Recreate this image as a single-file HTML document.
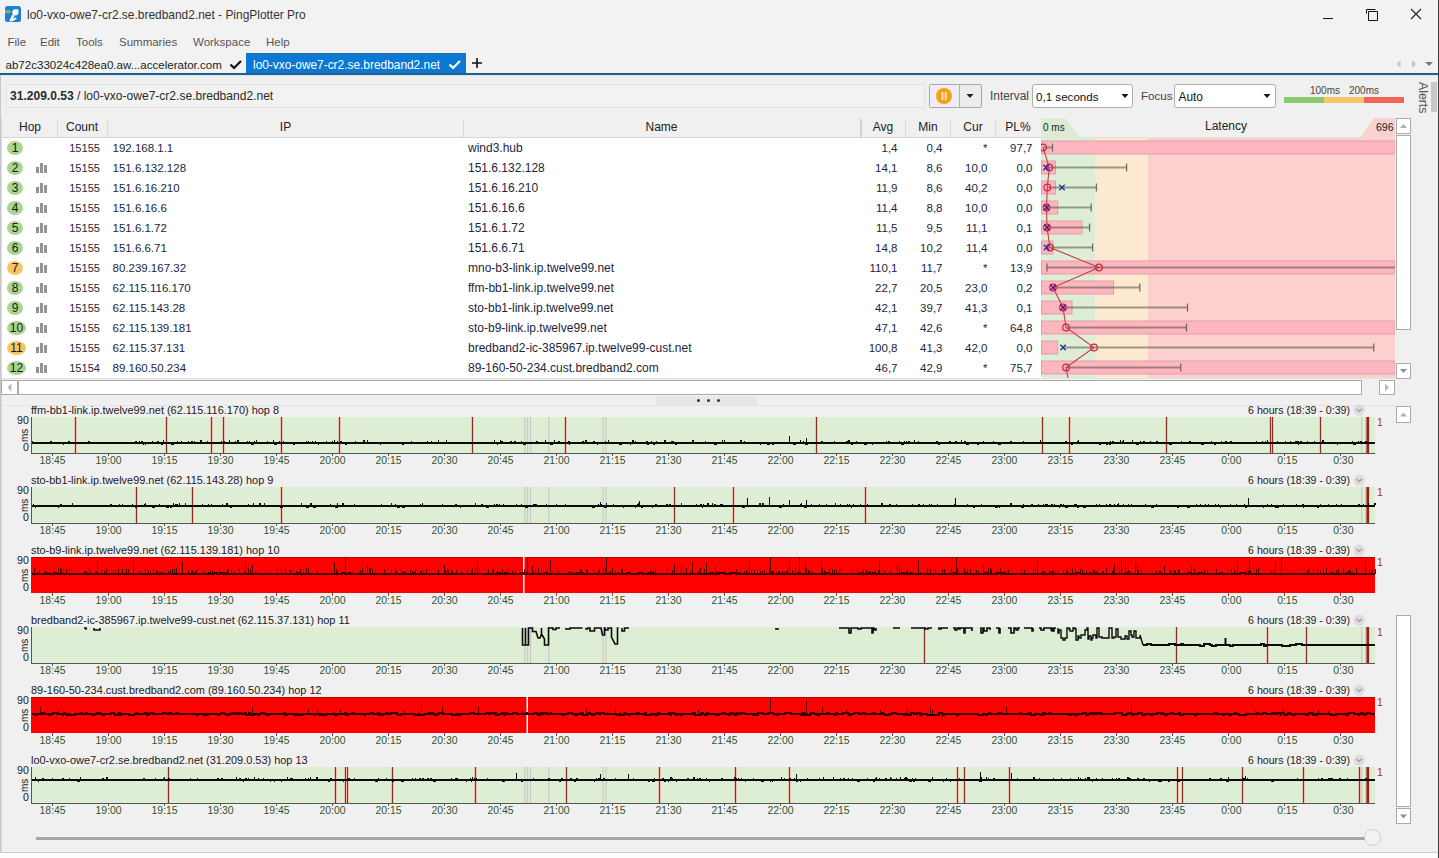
<!DOCTYPE html>
<html><head><meta charset="utf-8"><title>PingPlotter Pro</title>
<style>
html,body{margin:0;padding:0;}
body{width:1439px;height:858px;overflow:hidden;position:relative;background:#f0f0f0;font-family:"Liberation Sans",sans-serif;}
.t{position:absolute;white-space:pre;}
.r{position:absolute;}
svg.r{overflow:visible;}
</style></head><body>
<div class="r" style="left:0px;top:0px;width:1439px;height:73px;background:#f2f2f2;"></div>
<svg class="r" style="left:5px;top:6px" width="16" height="16" viewBox="0 0 16 16">
<rect x="0" y="0" width="16" height="16" rx="2.5" fill="#1f80d2"/>
<rect x="0" y="4.3" width="5.5" height="2.6" fill="#9cc43c" opacity="0.85"/>
<circle cx="10.4" cy="6.3" r="3.1" fill="#fff"/>
<circle cx="12.2" cy="4.4" r="1.2" fill="#fff"/>
<path d="M7.2 8.6 L9.6 9.8 L6.4 15.6 L4.2 15.6 Z" fill="#fff"/>
<path d="M6.5 13.2 L11.2 11.2 L11.4 13 L7.3 15.4 Z" fill="#fff"/>
</svg>
<div class="t" style="top:9px;left:27px;font-size:11.95px;line-height:13.35px;color:#333;">lo0-vxo-owe7-cr2.se.bredband2.net - PingPlotter Pro</div>
<div class="r" style="left:1323px;top:18px;width:10px;height:1px;background:#111;"></div>
<svg class="r" style="left:1360px;top:5px" width="24" height="20"><path d="M8.5 6.5 H17.5 V15.5 H8.5 Z M6.5 8.5 V4.5 H15.5" fill="none" stroke="#111" stroke-width="1"/></svg>
<svg class="r" style="left:1405px;top:3px" width="22" height="22"><path d="M6 6 L16 16 M16 6 L6 16" stroke="#222" stroke-width="1.1"/></svg>
<div class="t" style="top:36px;left:7.5px;font-size:11.5px;line-height:12.85px;color:#555;">File</div>
<div class="t" style="top:36px;left:40px;font-size:11.5px;line-height:12.85px;color:#555;">Edit</div>
<div class="t" style="top:36px;left:76px;font-size:11.5px;line-height:12.85px;color:#555;">Tools</div>
<div class="t" style="top:36px;left:119px;font-size:11.5px;line-height:12.85px;color:#555;">Summaries</div>
<div class="t" style="top:36px;left:193px;font-size:11.5px;line-height:12.85px;color:#555;">Workspace</div>
<div class="t" style="top:36px;left:266px;font-size:11.5px;line-height:12.85px;color:#555;">Help</div>
<div class="t" style="top:59px;left:5.5px;font-size:11.55px;line-height:12.90px;color:#222;">ab72c33024c428ea0.aw...accelerator.com</div>
<svg class="r" style="left:229px;top:59px" width="14" height="12"><path d="M1.5 5.5 L5 9 L12 2" fill="none" stroke="#111" stroke-width="2.2"/></svg>
<div class="r" style="left:246px;top:53px;width:220px;height:20px;background:#0b78d4;"></div>
<div class="r" style="left:246px;top:53px;width:220px;height:1px;background:#2a6ea6;"></div>
<div class="t" style="top:59px;left:253px;font-size:11.9px;line-height:13.29px;color:#fff;">lo0-vxo-owe7-cr2.se.bredband2.net</div>
<svg class="r" style="left:448px;top:59px" width="14" height="12"><path d="M1.5 5.5 L5 9 L12 2" fill="none" stroke="#fff" stroke-width="2.2"/></svg>
<svg class="r" style="left:470px;top:56px" width="14" height="14"><path d="M7 2 V12 M2 7 H12" stroke="#111" stroke-width="1.6"/></svg>
<svg class="r" style="left:1390px;top:56px" width="46" height="16">
<path d="M10.5 4 L6.5 8 L10.5 12 Z" fill="#c8c8c8"/><path d="M22 4 L26 8 L22 12 Z" fill="#c8c8c8"/><path d="M35 6 L43 6 L39 10 Z" fill="#777"/></svg>
<div class="r" style="left:0px;top:72px;width:246px;height:1px;background:#ddf7fb;"></div>
<div class="r" style="left:466px;top:72px;width:973px;height:1px;background:#ddf7fb;"></div>
<div class="r" style="left:0px;top:73px;width:1439px;height:1px;background:#2a5b80;"></div>
<div class="r" style="left:0px;top:74px;width:1439px;height:1px;background:#2f5f8a;"></div>
<div class="r" style="left:0px;top:75px;width:1439px;height:783px;background:#f0f0f0;"></div>
<div class="r" style="left:0px;top:75px;width:1439px;height:1px;background:#d2e8f6;"></div>
<div class="r" style="left:0px;top:76px;width:1439px;height:1px;background:#e8f2f5;"></div>
<div class="r" style="left:0px;top:75px;width:1px;height:777px;background:#c6c6c6;"></div>
<div class="r" style="left:1px;top:118px;width:1px;height:734px;background:#dcdcdc;"></div>
<div class="r" style="left:6px;top:84px;width:919px;height:24px;background:#f2f2f2;border:1px solid #e2e2e2;box-sizing:border-box;"></div>
<div class="t" style="top:90px;left:10px;font-size:12.05px;line-height:13.46px;color:#2a2a2a;"><b>31.209.0.53</b> / lo0-vxo-owe7-cr2.se.bredband2.net</div>
<div class="r" style="left:929px;top:84px;width:53px;height:24px;background:#ececec;border:1px solid #a9a9a9;box-sizing:border-box;border-radius:2px;"></div>
<div class="r" style="left:930px;top:85px;width:29px;height:22px;background:#eeeef2;"></div>
<div class="r" style="left:959px;top:85px;width:1px;height:22px;background:#b4b4b4;"></div>
<svg class="r" style="left:934px;top:86px" width="20" height="20"><circle cx="10" cy="10" r="8" fill="#f4a21c"/><rect x="7.6" y="6" width="1.8" height="8" fill="#fde9b8"/><rect x="10.8" y="6" width="1.8" height="8" fill="#fde9b8"/></svg>
<svg class="r" style="left:965px;top:92px" width="10" height="8"><path d="M1.5 2 L8.5 2 L5 6 Z" fill="#222"/></svg>
<div class="t" style="top:90px;left:990px;font-size:11.9px;line-height:13.29px;color:#444;">Interval</div>
<div class="r" style="left:1032px;top:84px;width:101px;height:24px;background:#fff;border:1px solid #adadad;box-sizing:border-box;border-radius:3px;"></div>
<div class="t" style="top:91px;left:1036px;font-size:11.6px;line-height:12.96px;color:#111;">0,1 seconds</div>
<svg class="r" style="left:1120px;top:92px" width="12" height="8"><path d="M1.5 2 L8.5 2 L5 6 Z" fill="#111"/></svg>
<div class="t" style="top:90px;left:1141px;font-size:11.6px;line-height:12.96px;color:#444;">Focus</div>
<div class="r" style="left:1174px;top:84px;width:102px;height:24px;background:#fff;border:1px solid #adadad;box-sizing:border-box;border-radius:3px;"></div>
<div class="t" style="top:91px;left:1178.5px;font-size:11.9px;line-height:13.29px;color:#111;">Auto</div>
<svg class="r" style="left:1262px;top:92px" width="12" height="8"><path d="M1.5 2 L8.5 2 L5 6 Z" fill="#111"/></svg>
<div class="t" style="top:85px;left:1310px;font-size:10px;line-height:11.17px;color:#444;">100ms</div>
<div class="t" style="top:85px;left:1349px;font-size:10px;line-height:11.17px;color:#444;">200ms</div>
<div class="r" style="left:1284px;top:97px;width:40px;height:6px;background:#8cc870;"></div>
<div class="r" style="left:1324px;top:97px;width:40px;height:6px;background:#f8c468;"></div>
<div class="r" style="left:1364px;top:97px;width:40px;height:6px;background:#ee6655;"></div>
<div class="t" style="left:1429px;top:82px;font-size:12.3px;line-height:12px;color:#555;transform-origin:0 0;transform:rotate(90deg);">Alerts</div>
<div class="r" style="left:1431px;top:82px;width:6px;height:30px;background:#c8c8c8;"></div>
<div class="r" style="left:1438px;top:0px;width:1px;height:858px;background:#3c3c42;"></div>
<div class="r" style="left:2px;top:117px;width:1039px;height:20px;background:#f0f0f0;"></div>
<div class="r" style="left:57px;top:119px;width:1px;height:18px;background:#dadada;"></div>
<div class="r" style="left:107px;top:119px;width:1px;height:18px;background:#dadada;"></div>
<div class="r" style="left:463px;top:119px;width:1px;height:18px;background:#dadada;"></div>
<div class="r" style="left:905px;top:119px;width:1px;height:18px;background:#dadada;"></div>
<div class="r" style="left:950px;top:119px;width:1px;height:18px;background:#dadada;"></div>
<div class="r" style="left:995px;top:119px;width:1px;height:18px;background:#dadada;"></div>
<div class="r" style="left:860px;top:119px;width:2px;height:18px;background:#d2d2d2;"></div>
<div class="r" style="left:2px;top:137px;width:1039px;height:1px;background:#d6d6d6;"></div>
<div class="t" style="top:121px;left:-10.0px;width:80px;text-align:center;font-size:12px;line-height:13.40px;color:#222;">Hop</div>
<div class="t" style="top:121px;left:42.0px;width:80px;text-align:center;font-size:12px;line-height:13.40px;color:#222;">Count</div>
<div class="t" style="top:121px;left:245.5px;width:80px;text-align:center;font-size:12px;line-height:13.40px;color:#222;">IP</div>
<div class="t" style="top:121px;left:621.5px;width:80px;text-align:center;font-size:12px;line-height:13.40px;color:#222;">Name</div>
<div class="t" style="top:121px;left:843.0px;width:80px;text-align:center;font-size:12px;line-height:13.40px;color:#222;">Avg</div>
<div class="t" style="top:121px;left:888.0px;width:80px;text-align:center;font-size:12px;line-height:13.40px;color:#222;">Min</div>
<div class="t" style="top:121px;left:933.0px;width:80px;text-align:center;font-size:12px;line-height:13.40px;color:#222;">Cur</div>
<div class="t" style="top:121px;left:978.0px;width:80px;text-align:center;font-size:12px;line-height:13.40px;color:#222;">PL%</div>
<svg class="r" style="left:1041px;top:117px" width="354" height="21">
<path d="M0 1 L24 1 L39 20 L0 20 Z" fill="#dcecd3"/>
<path d="M333 1 L354 1 L354 20 L320 20 Z" fill="#fbd0d0"/>
<rect x="0" y="20" width="354" height="1" fill="#e8e2d8"/>
</svg>
<div class="t" style="top:122px;left:1043px;font-size:10px;line-height:11.17px;color:#222;">0 ms</div>
<div class="t" style="top:120px;left:1176.0px;width:100px;text-align:center;font-size:12px;line-height:13.40px;color:#222;">Latency</div>
<div class="t" style="top:122px;left:1353.5px;width:40px;text-align:right;font-size:10.5px;line-height:11.73px;color:#222;">696</div>
<div class="r" style="left:2px;top:138px;width:1039px;height:240px;background:#fff;"></div>
<div class="r" style="left:7px;top:141.0px;width:16px;height:14px;border-radius:50%;background:#a8d590;"></div>
<div class="t" style="top:142px;left:0.0px;width:30px;text-align:center;font-size:12px;line-height:13.40px;color:#1a1a1a;">1</div>
<div class="t" style="top:142px;left:40px;width:60px;text-align:right;font-size:11.1px;line-height:12.40px;color:#1b2640;">15155</div>
<div class="t" style="top:142px;left:112.5px;font-size:11.5px;line-height:12.85px;color:#1b2640;">192.168.1.1</div>
<div class="t" style="top:142px;left:468px;font-size:12px;line-height:13.40px;color:#1b2640;">wind3.hub</div>
<div class="t" style="top:142px;left:837.5px;width:60px;text-align:right;font-size:11.5px;line-height:12.85px;color:#1b2640;">1,4</div>
<div class="t" style="top:142px;left:882.5px;width:60px;text-align:right;font-size:11.5px;line-height:12.85px;color:#1b2640;">0,4</div>
<div class="t" style="top:142px;left:927.5px;width:60px;text-align:right;font-size:11.5px;line-height:12.85px;color:#1b2640;">*</div>
<div class="t" style="top:142px;left:972.5px;width:60px;text-align:right;font-size:11.5px;line-height:12.85px;color:#1b2640;">97,7</div>
<div class="r" style="left:7px;top:161.0px;width:16px;height:14px;border-radius:50%;background:#a8d590;"></div>
<div class="t" style="top:162px;left:0.0px;width:30px;text-align:center;font-size:12px;line-height:13.40px;color:#1a1a1a;">2</div>
<div class="r" style="left:36px;top:167.0px;width:3px;height:6px;background:#939393;"></div>
<div class="r" style="left:40px;top:163.0px;width:3px;height:10px;background:#939393;"></div>
<div class="r" style="left:44px;top:165.0px;width:3px;height:8px;background:#939393;"></div>
<div class="t" style="top:162px;left:40px;width:60px;text-align:right;font-size:11.1px;line-height:12.40px;color:#1b2640;">15155</div>
<div class="t" style="top:162px;left:112.5px;font-size:11.5px;line-height:12.85px;color:#1b2640;">151.6.132.128</div>
<div class="t" style="top:162px;left:468px;font-size:12px;line-height:13.40px;color:#1b2640;">151.6.132.128</div>
<div class="t" style="top:162px;left:837.5px;width:60px;text-align:right;font-size:11.5px;line-height:12.85px;color:#1b2640;">14,1</div>
<div class="t" style="top:162px;left:882.5px;width:60px;text-align:right;font-size:11.5px;line-height:12.85px;color:#1b2640;">8,6</div>
<div class="t" style="top:162px;left:927.5px;width:60px;text-align:right;font-size:11.5px;line-height:12.85px;color:#1b2640;">10,0</div>
<div class="t" style="top:162px;left:972.5px;width:60px;text-align:right;font-size:11.5px;line-height:12.85px;color:#1b2640;">0,0</div>
<div class="r" style="left:7px;top:181.0px;width:16px;height:14px;border-radius:50%;background:#a8d590;"></div>
<div class="t" style="top:182px;left:0.0px;width:30px;text-align:center;font-size:12px;line-height:13.40px;color:#1a1a1a;">3</div>
<div class="r" style="left:36px;top:187.0px;width:3px;height:6px;background:#939393;"></div>
<div class="r" style="left:40px;top:183.0px;width:3px;height:10px;background:#939393;"></div>
<div class="r" style="left:44px;top:185.0px;width:3px;height:8px;background:#939393;"></div>
<div class="t" style="top:182px;left:40px;width:60px;text-align:right;font-size:11.1px;line-height:12.40px;color:#1b2640;">15155</div>
<div class="t" style="top:182px;left:112.5px;font-size:11.5px;line-height:12.85px;color:#1b2640;">151.6.16.210</div>
<div class="t" style="top:182px;left:468px;font-size:12px;line-height:13.40px;color:#1b2640;">151.6.16.210</div>
<div class="t" style="top:182px;left:837.5px;width:60px;text-align:right;font-size:11.5px;line-height:12.85px;color:#1b2640;">11,9</div>
<div class="t" style="top:182px;left:882.5px;width:60px;text-align:right;font-size:11.5px;line-height:12.85px;color:#1b2640;">8,6</div>
<div class="t" style="top:182px;left:927.5px;width:60px;text-align:right;font-size:11.5px;line-height:12.85px;color:#1b2640;">40,2</div>
<div class="t" style="top:182px;left:972.5px;width:60px;text-align:right;font-size:11.5px;line-height:12.85px;color:#1b2640;">0,0</div>
<div class="r" style="left:7px;top:201.0px;width:16px;height:14px;border-radius:50%;background:#a8d590;"></div>
<div class="t" style="top:202px;left:0.0px;width:30px;text-align:center;font-size:12px;line-height:13.40px;color:#1a1a1a;">4</div>
<div class="r" style="left:36px;top:207.0px;width:3px;height:6px;background:#939393;"></div>
<div class="r" style="left:40px;top:203.0px;width:3px;height:10px;background:#939393;"></div>
<div class="r" style="left:44px;top:205.0px;width:3px;height:8px;background:#939393;"></div>
<div class="t" style="top:202px;left:40px;width:60px;text-align:right;font-size:11.1px;line-height:12.40px;color:#1b2640;">15155</div>
<div class="t" style="top:202px;left:112.5px;font-size:11.5px;line-height:12.85px;color:#1b2640;">151.6.16.6</div>
<div class="t" style="top:202px;left:468px;font-size:12px;line-height:13.40px;color:#1b2640;">151.6.16.6</div>
<div class="t" style="top:202px;left:837.5px;width:60px;text-align:right;font-size:11.5px;line-height:12.85px;color:#1b2640;">11,4</div>
<div class="t" style="top:202px;left:882.5px;width:60px;text-align:right;font-size:11.5px;line-height:12.85px;color:#1b2640;">8,8</div>
<div class="t" style="top:202px;left:927.5px;width:60px;text-align:right;font-size:11.5px;line-height:12.85px;color:#1b2640;">10,0</div>
<div class="t" style="top:202px;left:972.5px;width:60px;text-align:right;font-size:11.5px;line-height:12.85px;color:#1b2640;">0,0</div>
<div class="r" style="left:7px;top:221.0px;width:16px;height:14px;border-radius:50%;background:#a8d590;"></div>
<div class="t" style="top:222px;left:0.0px;width:30px;text-align:center;font-size:12px;line-height:13.40px;color:#1a1a1a;">5</div>
<div class="r" style="left:36px;top:227.0px;width:3px;height:6px;background:#939393;"></div>
<div class="r" style="left:40px;top:223.0px;width:3px;height:10px;background:#939393;"></div>
<div class="r" style="left:44px;top:225.0px;width:3px;height:8px;background:#939393;"></div>
<div class="t" style="top:222px;left:40px;width:60px;text-align:right;font-size:11.1px;line-height:12.40px;color:#1b2640;">15155</div>
<div class="t" style="top:222px;left:112.5px;font-size:11.5px;line-height:12.85px;color:#1b2640;">151.6.1.72</div>
<div class="t" style="top:222px;left:468px;font-size:12px;line-height:13.40px;color:#1b2640;">151.6.1.72</div>
<div class="t" style="top:222px;left:837.5px;width:60px;text-align:right;font-size:11.5px;line-height:12.85px;color:#1b2640;">11,5</div>
<div class="t" style="top:222px;left:882.5px;width:60px;text-align:right;font-size:11.5px;line-height:12.85px;color:#1b2640;">9,5</div>
<div class="t" style="top:222px;left:927.5px;width:60px;text-align:right;font-size:11.5px;line-height:12.85px;color:#1b2640;">11,1</div>
<div class="t" style="top:222px;left:972.5px;width:60px;text-align:right;font-size:11.5px;line-height:12.85px;color:#1b2640;">0,1</div>
<div class="r" style="left:7px;top:241.0px;width:16px;height:14px;border-radius:50%;background:#a8d590;"></div>
<div class="t" style="top:242px;left:0.0px;width:30px;text-align:center;font-size:12px;line-height:13.40px;color:#1a1a1a;">6</div>
<div class="r" style="left:36px;top:247.0px;width:3px;height:6px;background:#939393;"></div>
<div class="r" style="left:40px;top:243.0px;width:3px;height:10px;background:#939393;"></div>
<div class="r" style="left:44px;top:245.0px;width:3px;height:8px;background:#939393;"></div>
<div class="t" style="top:242px;left:40px;width:60px;text-align:right;font-size:11.1px;line-height:12.40px;color:#1b2640;">15155</div>
<div class="t" style="top:242px;left:112.5px;font-size:11.5px;line-height:12.85px;color:#1b2640;">151.6.6.71</div>
<div class="t" style="top:242px;left:468px;font-size:12px;line-height:13.40px;color:#1b2640;">151.6.6.71</div>
<div class="t" style="top:242px;left:837.5px;width:60px;text-align:right;font-size:11.5px;line-height:12.85px;color:#1b2640;">14,8</div>
<div class="t" style="top:242px;left:882.5px;width:60px;text-align:right;font-size:11.5px;line-height:12.85px;color:#1b2640;">10,2</div>
<div class="t" style="top:242px;left:927.5px;width:60px;text-align:right;font-size:11.5px;line-height:12.85px;color:#1b2640;">11,4</div>
<div class="t" style="top:242px;left:972.5px;width:60px;text-align:right;font-size:11.5px;line-height:12.85px;color:#1b2640;">0,0</div>
<div class="r" style="left:7px;top:261.0px;width:16px;height:14px;border-radius:50%;background:#f7c462;"></div>
<div class="t" style="top:262px;left:0.0px;width:30px;text-align:center;font-size:12px;line-height:13.40px;color:#1a1a1a;">7</div>
<div class="r" style="left:36px;top:267.0px;width:3px;height:6px;background:#939393;"></div>
<div class="r" style="left:40px;top:263.0px;width:3px;height:10px;background:#939393;"></div>
<div class="r" style="left:44px;top:265.0px;width:3px;height:8px;background:#939393;"></div>
<div class="t" style="top:262px;left:40px;width:60px;text-align:right;font-size:11.1px;line-height:12.40px;color:#1b2640;">15155</div>
<div class="t" style="top:262px;left:112.5px;font-size:11.5px;line-height:12.85px;color:#1b2640;">80.239.167.32</div>
<div class="t" style="top:262px;left:468px;font-size:12px;line-height:13.40px;color:#1b2640;">mno-b3-link.ip.twelve99.net</div>
<div class="t" style="top:262px;left:837.5px;width:60px;text-align:right;font-size:11.5px;line-height:12.85px;color:#1b2640;">110,1</div>
<div class="t" style="top:262px;left:882.5px;width:60px;text-align:right;font-size:11.5px;line-height:12.85px;color:#1b2640;">11,7</div>
<div class="t" style="top:262px;left:927.5px;width:60px;text-align:right;font-size:11.5px;line-height:12.85px;color:#1b2640;">*</div>
<div class="t" style="top:262px;left:972.5px;width:60px;text-align:right;font-size:11.5px;line-height:12.85px;color:#1b2640;">13,9</div>
<div class="r" style="left:7px;top:281.0px;width:16px;height:14px;border-radius:50%;background:#a8d590;"></div>
<div class="t" style="top:282px;left:0.0px;width:30px;text-align:center;font-size:12px;line-height:13.40px;color:#1a1a1a;">8</div>
<div class="r" style="left:36px;top:287.0px;width:3px;height:6px;background:#939393;"></div>
<div class="r" style="left:40px;top:283.0px;width:3px;height:10px;background:#939393;"></div>
<div class="r" style="left:44px;top:285.0px;width:3px;height:8px;background:#939393;"></div>
<div class="t" style="top:282px;left:40px;width:60px;text-align:right;font-size:11.1px;line-height:12.40px;color:#1b2640;">15155</div>
<div class="t" style="top:282px;left:112.5px;font-size:11.5px;line-height:12.85px;color:#1b2640;">62.115.116.170</div>
<div class="t" style="top:282px;left:468px;font-size:12px;line-height:13.40px;color:#1b2640;">ffm-bb1-link.ip.twelve99.net</div>
<div class="t" style="top:282px;left:837.5px;width:60px;text-align:right;font-size:11.5px;line-height:12.85px;color:#1b2640;">22,7</div>
<div class="t" style="top:282px;left:882.5px;width:60px;text-align:right;font-size:11.5px;line-height:12.85px;color:#1b2640;">20,5</div>
<div class="t" style="top:282px;left:927.5px;width:60px;text-align:right;font-size:11.5px;line-height:12.85px;color:#1b2640;">23,0</div>
<div class="t" style="top:282px;left:972.5px;width:60px;text-align:right;font-size:11.5px;line-height:12.85px;color:#1b2640;">0,2</div>
<div class="r" style="left:7px;top:301.0px;width:16px;height:14px;border-radius:50%;background:#a8d590;"></div>
<div class="t" style="top:302px;left:0.0px;width:30px;text-align:center;font-size:12px;line-height:13.40px;color:#1a1a1a;">9</div>
<div class="r" style="left:36px;top:307.0px;width:3px;height:6px;background:#939393;"></div>
<div class="r" style="left:40px;top:303.0px;width:3px;height:10px;background:#939393;"></div>
<div class="r" style="left:44px;top:305.0px;width:3px;height:8px;background:#939393;"></div>
<div class="t" style="top:302px;left:40px;width:60px;text-align:right;font-size:11.1px;line-height:12.40px;color:#1b2640;">15155</div>
<div class="t" style="top:302px;left:112.5px;font-size:11.5px;line-height:12.85px;color:#1b2640;">62.115.143.28</div>
<div class="t" style="top:302px;left:468px;font-size:12px;line-height:13.40px;color:#1b2640;">sto-bb1-link.ip.twelve99.net</div>
<div class="t" style="top:302px;left:837.5px;width:60px;text-align:right;font-size:11.5px;line-height:12.85px;color:#1b2640;">42,1</div>
<div class="t" style="top:302px;left:882.5px;width:60px;text-align:right;font-size:11.5px;line-height:12.85px;color:#1b2640;">39,7</div>
<div class="t" style="top:302px;left:927.5px;width:60px;text-align:right;font-size:11.5px;line-height:12.85px;color:#1b2640;">41,3</div>
<div class="t" style="top:302px;left:972.5px;width:60px;text-align:right;font-size:11.5px;line-height:12.85px;color:#1b2640;">0,1</div>
<div class="r" style="left:7px;top:321.0px;width:19px;height:14px;border-radius:50%;background:#a8d590;"></div>
<div class="t" style="top:322px;left:1.5px;width:30px;text-align:center;font-size:12px;line-height:13.40px;color:#1a1a1a;">10</div>
<div class="r" style="left:36px;top:327.0px;width:3px;height:6px;background:#939393;"></div>
<div class="r" style="left:40px;top:323.0px;width:3px;height:10px;background:#939393;"></div>
<div class="r" style="left:44px;top:325.0px;width:3px;height:8px;background:#939393;"></div>
<div class="t" style="top:322px;left:40px;width:60px;text-align:right;font-size:11.1px;line-height:12.40px;color:#1b2640;">15155</div>
<div class="t" style="top:322px;left:112.5px;font-size:11.5px;line-height:12.85px;color:#1b2640;">62.115.139.181</div>
<div class="t" style="top:322px;left:468px;font-size:12px;line-height:13.40px;color:#1b2640;">sto-b9-link.ip.twelve99.net</div>
<div class="t" style="top:322px;left:837.5px;width:60px;text-align:right;font-size:11.5px;line-height:12.85px;color:#1b2640;">47,1</div>
<div class="t" style="top:322px;left:882.5px;width:60px;text-align:right;font-size:11.5px;line-height:12.85px;color:#1b2640;">42,6</div>
<div class="t" style="top:322px;left:927.5px;width:60px;text-align:right;font-size:11.5px;line-height:12.85px;color:#1b2640;">*</div>
<div class="t" style="top:322px;left:972.5px;width:60px;text-align:right;font-size:11.5px;line-height:12.85px;color:#1b2640;">64,8</div>
<div class="r" style="left:7px;top:341.0px;width:19px;height:14px;border-radius:50%;background:#f7c462;"></div>
<div class="t" style="top:342px;left:1.5px;width:30px;text-align:center;font-size:12px;line-height:13.40px;color:#1a1a1a;">11</div>
<div class="r" style="left:36px;top:347.0px;width:3px;height:6px;background:#939393;"></div>
<div class="r" style="left:40px;top:343.0px;width:3px;height:10px;background:#939393;"></div>
<div class="r" style="left:44px;top:345.0px;width:3px;height:8px;background:#939393;"></div>
<div class="t" style="top:342px;left:40px;width:60px;text-align:right;font-size:11.1px;line-height:12.40px;color:#1b2640;">15155</div>
<div class="t" style="top:342px;left:112.5px;font-size:11.5px;line-height:12.85px;color:#1b2640;">62.115.37.131</div>
<div class="t" style="top:342px;left:468px;font-size:12px;line-height:13.40px;color:#1b2640;">bredband2-ic-385967.ip.twelve99-cust.net</div>
<div class="t" style="top:342px;left:837.5px;width:60px;text-align:right;font-size:11.5px;line-height:12.85px;color:#1b2640;">100,8</div>
<div class="t" style="top:342px;left:882.5px;width:60px;text-align:right;font-size:11.5px;line-height:12.85px;color:#1b2640;">41,3</div>
<div class="t" style="top:342px;left:927.5px;width:60px;text-align:right;font-size:11.5px;line-height:12.85px;color:#1b2640;">42,0</div>
<div class="t" style="top:342px;left:972.5px;width:60px;text-align:right;font-size:11.5px;line-height:12.85px;color:#1b2640;">0,0</div>
<div class="r" style="left:7px;top:361.0px;width:19px;height:14px;border-radius:50%;background:#a8d590;"></div>
<div class="t" style="top:362px;left:1.5px;width:30px;text-align:center;font-size:12px;line-height:13.40px;color:#1a1a1a;">12</div>
<div class="r" style="left:36px;top:367.0px;width:3px;height:6px;background:#939393;"></div>
<div class="r" style="left:40px;top:363.0px;width:3px;height:10px;background:#939393;"></div>
<div class="r" style="left:44px;top:365.0px;width:3px;height:8px;background:#939393;"></div>
<div class="t" style="top:362px;left:40px;width:60px;text-align:right;font-size:11.1px;line-height:12.40px;color:#1b2640;">15154</div>
<div class="t" style="top:362px;left:112.5px;font-size:11.5px;line-height:12.85px;color:#1b2640;">89.160.50.234</div>
<div class="t" style="top:362px;left:468px;font-size:12px;line-height:13.40px;color:#1b2640;">89-160-50-234.cust.bredband2.com</div>
<div class="t" style="top:362px;left:837.5px;width:60px;text-align:right;font-size:11.5px;line-height:12.85px;color:#1b2640;">46,7</div>
<div class="t" style="top:362px;left:882.5px;width:60px;text-align:right;font-size:11.5px;line-height:12.85px;color:#1b2640;">42,9</div>
<div class="t" style="top:362px;left:927.5px;width:60px;text-align:right;font-size:11.5px;line-height:12.85px;color:#1b2640;">*</div>
<div class="t" style="top:362px;left:972.5px;width:60px;text-align:right;font-size:11.5px;line-height:12.85px;color:#1b2640;">75,7</div>
<svg class="r" style="left:1041px;top:138px;overflow:hidden" width="354" height="240"><rect x="0" y="0" width="54" height="240" fill="#deeed6"/><rect x="54" y="0" width="53" height="240" fill="#fde9cf"/><rect x="107" y="0" width="247" height="240" fill="#fdd0d0"/><rect x="0.5" y="3.0" width="353.5" height="13" fill="#ffb6c1" stroke="#dca0a6" stroke-width="1"/><rect x="0.5" y="23.0" width="14.0" height="13" fill="#ffb6c1" stroke="#dca0a6" stroke-width="1"/><rect x="0.5" y="43.0" width="14.0" height="13" fill="#ffb6c1" stroke="#dca0a6" stroke-width="1"/><rect x="0.5" y="63.0" width="16.200000000000045" height="13" fill="#ffb6c1" stroke="#dca0a6" stroke-width="1"/><rect x="0.5" y="83.0" width="40.5" height="13" fill="#ffb6c1" stroke="#dca0a6" stroke-width="1"/><rect x="0.5" y="103.0" width="11.5" height="13" fill="#ffb6c1" stroke="#dca0a6" stroke-width="1"/><rect x="0.5" y="123.0" width="353.5" height="13" fill="#ffb6c1" stroke="#dca0a6" stroke-width="1"/><rect x="0.5" y="143.0" width="72.09999999999991" height="13" fill="#ffb6c1" stroke="#dca0a6" stroke-width="1"/><rect x="0.5" y="163.0" width="30.5" height="13" fill="#ffb6c1" stroke="#dca0a6" stroke-width="1"/><rect x="0.5" y="183.0" width="353.5" height="13" fill="#ffb6c1" stroke="#dca0a6" stroke-width="1"/><rect x="0.5" y="203.0" width="16.200000000000045" height="13" fill="#ffb6c1" stroke="#dca0a6" stroke-width="1"/><rect x="0.5" y="223.0" width="353.5" height="13" fill="#ffb6c1" stroke="#dca0a6" stroke-width="1"/><line x1="2" y1="9.5" x2="11.5" y2="9.5" stroke="rgb(70,70,55)" stroke-width="2" opacity="0.5"/><line x1="11.5" y1="5.5" x2="11.5" y2="13.5" stroke="#6f6c62" stroke-width="1.3"/><line x1="5" y1="29.5" x2="85.59999999999991" y2="29.5" stroke="rgb(70,70,55)" stroke-width="2" opacity="0.5"/><line x1="85.59999999999991" y1="25.5" x2="85.59999999999991" y2="33.5" stroke="#6f6c62" stroke-width="1.3"/><line x1="6" y1="49.5" x2="55.40000000000009" y2="49.5" stroke="rgb(70,70,55)" stroke-width="2" opacity="0.5"/><line x1="55.40000000000009" y1="45.5" x2="55.40000000000009" y2="53.5" stroke="#6f6c62" stroke-width="1.3"/><line x1="5.5" y1="69.5" x2="50.200000000000045" y2="69.5" stroke="rgb(70,70,55)" stroke-width="2" opacity="0.5"/><line x1="50.200000000000045" y1="65.5" x2="50.200000000000045" y2="73.5" stroke="#6f6c62" stroke-width="1.3"/><line x1="6" y1="89.5" x2="48.59999999999991" y2="89.5" stroke="rgb(70,70,55)" stroke-width="2" opacity="0.5"/><line x1="48.59999999999991" y1="85.5" x2="48.59999999999991" y2="93.5" stroke="#6f6c62" stroke-width="1.3"/><line x1="5.5" y1="109.5" x2="51.59999999999991" y2="109.5" stroke="rgb(70,70,55)" stroke-width="2" opacity="0.5"/><line x1="51.59999999999991" y1="105.5" x2="51.59999999999991" y2="113.5" stroke="#6f6c62" stroke-width="1.3"/><line x1="6" y1="129.5" x2="354" y2="129.5" stroke="rgb(70,70,55)" stroke-width="2" opacity="0.5"/><line x1="6" y1="125.5" x2="6" y2="133.5" stroke="#6f6c62" stroke-width="1.3"/><line x1="12" y1="149.5" x2="98.79999999999995" y2="149.5" stroke="rgb(70,70,55)" stroke-width="2" opacity="0.5"/><line x1="98.79999999999995" y1="145.5" x2="98.79999999999995" y2="153.5" stroke="#6f6c62" stroke-width="1.3"/><line x1="22" y1="169.5" x2="146.5" y2="169.5" stroke="rgb(70,70,55)" stroke-width="2" opacity="0.5"/><line x1="146.5" y1="165.5" x2="146.5" y2="173.5" stroke="#6f6c62" stroke-width="1.3"/><line x1="25" y1="189.5" x2="145.5" y2="189.5" stroke="rgb(70,70,55)" stroke-width="2" opacity="0.5"/><line x1="145.5" y1="185.5" x2="145.5" y2="193.5" stroke="#6f6c62" stroke-width="1.3"/><line x1="22" y1="209.5" x2="332.79999999999995" y2="209.5" stroke="rgb(70,70,55)" stroke-width="2" opacity="0.5"/><line x1="332.79999999999995" y1="205.5" x2="332.79999999999995" y2="213.5" stroke="#6f6c62" stroke-width="1.3"/><line x1="25" y1="229.5" x2="139.70000000000005" y2="229.5" stroke="rgb(70,70,55)" stroke-width="2" opacity="0.5"/><line x1="139.70000000000005" y1="225.5" x2="139.70000000000005" y2="233.5" stroke="#6f6c62" stroke-width="1.3"/><polyline points="2,9.5 8.299999999999955,29.5 6.2999999999999545,49.5 5.5,69.5 6,89.5 9,109.5 58,129.5 12,149.5 22,169.5 25,189.5 53,209.5 25,229.5 27,240" fill="none" stroke="#cc3b4a" stroke-width="1.1"/><circle cx="2" cy="9.5" r="3.3" fill="none" stroke="#c8283c" stroke-width="1.2"/><circle cx="8.299999999999955" cy="29.5" r="3.3" fill="none" stroke="#c8283c" stroke-width="1.2"/><path d="M2.3 26.8 L7.7 32.2 M7.7 26.8 L2.3 32.2" stroke="#2a2a9a" stroke-width="1.3"/><circle cx="6.2999999999999545" cy="49.5" r="3.3" fill="none" stroke="#c8283c" stroke-width="1.2"/><path d="M18.3 46.8 L23.7 52.2 M23.7 46.8 L18.3 52.2" stroke="#2a2a9a" stroke-width="1.3"/><circle cx="5.5" cy="69.5" r="3.3" fill="none" stroke="#c8283c" stroke-width="1.2"/><path d="M2.8 66.8 L8.2 72.2 M8.2 66.8 L2.8 72.2" stroke="#4a1a80" stroke-width="1.3"/><circle cx="6" cy="89.5" r="3.3" fill="none" stroke="#c8283c" stroke-width="1.2"/><path d="M3.3 86.8 L8.7 92.2 M8.7 86.8 L3.3 92.2" stroke="#4a1a80" stroke-width="1.3"/><circle cx="9" cy="109.5" r="3.3" fill="none" stroke="#c8283c" stroke-width="1.2"/><path d="M2.8 106.8 L8.2 112.2 M8.2 106.8 L2.8 112.2" stroke="#2a2a9a" stroke-width="1.3"/><circle cx="58" cy="129.5" r="3.3" fill="none" stroke="#c8283c" stroke-width="1.2"/><circle cx="12" cy="149.5" r="3.3" fill="none" stroke="#c8283c" stroke-width="1.2"/><path d="M9.3 146.8 L14.7 152.2 M14.7 146.8 L9.3 152.2" stroke="#4a1a80" stroke-width="1.3"/><circle cx="22" cy="169.5" r="3.3" fill="none" stroke="#c8283c" stroke-width="1.2"/><path d="M19.3 166.8 L24.7 172.2 M24.7 166.8 L19.3 172.2" stroke="#4a1a80" stroke-width="1.3"/><circle cx="25" cy="189.5" r="3.3" fill="none" stroke="#c8283c" stroke-width="1.2"/><circle cx="53" cy="209.5" r="3.3" fill="none" stroke="#c8283c" stroke-width="1.2"/><path d="M19.3 206.8 L24.7 212.2 M24.7 206.8 L19.3 212.2" stroke="#2a2a9a" stroke-width="1.3"/><circle cx="25" cy="229.5" r="3.3" fill="none" stroke="#c8283c" stroke-width="1.2"/></svg>
<div class="r" style="left:1395px;top:117px;width:15px;height:262px;background:#f0f0f0;"></div>
<div class="r" style="left:1396px;top:118px;width:15px;height:16px;background:#fff;border:1px solid #ababab;box-sizing:border-box;"></div>
<svg class="r" style="left:1396px;top:118px" width="15" height="16"><path d="M4 10 L11 10 L7.5 6 Z" fill="#b0b0b0"/></svg>
<div class="r" style="left:1396px;top:135px;width:15px;height:195px;background:#fff;border:1px solid #ababab;box-sizing:border-box;"></div>
<div class="r" style="left:1396px;top:363px;width:15px;height:16px;background:#fff;border:1px solid #ababab;box-sizing:border-box;"></div>
<svg class="r" style="left:1396px;top:363px" width="15" height="16"><path d="M4 6 L11 6 L7.5 10 Z" fill="#909090"/></svg>
<div class="r" style="left:2px;top:378px;width:1393px;height:1px;background:#e2e2e2;"></div>
<div class="r" style="left:1px;top:380px;width:17px;height:15px;background:#fff;border:1px solid #ababab;box-sizing:border-box;"></div>
<svg class="r" style="left:1px;top:380px" width="17" height="15"><path d="M10.5 3.5 L10.5 11.5 L6.5 7.5 Z" fill="#b8b8b8"/></svg>
<div class="r" style="left:18px;top:380px;width:1344px;height:15px;background:#fff;border:1px solid #ababab;box-sizing:border-box;"></div>
<div class="r" style="left:1379px;top:380px;width:16px;height:15px;background:#fff;border:1px solid #ababab;box-sizing:border-box;"></div>
<svg class="r" style="left:1379px;top:380px" width="16" height="15"><path d="M6 3.5 L6 11.5 L10 7.5 Z" fill="#b8b8b8"/></svg>
<div class="r" style="left:656px;top:396px;width:101px;height:10px;background:#e7e7e7;"></div>
<div class="r" style="left:2px;top:405px;width:1393px;height:1px;background:#e4e4e4;"></div>
<div class="r" style="left:696.6px;top:398.6px;width:3.8px;height:3.8px;border-radius:50%;background:#333;"></div>
<div class="r" style="left:706.6px;top:398.6px;width:3.8px;height:3.8px;border-radius:50%;background:#333;"></div>
<div class="r" style="left:716.6px;top:398.6px;width:3.8px;height:3.8px;border-radius:50%;background:#333;"></div>
<div class="t" style="top:404px;left:31px;font-size:10.95px;line-height:12.23px;color:#1a1a1a;">ffm-bb1-link.ip.twelve99.net (62.115.116.170) hop 8</div>
<div class="t" style="top:405px;left:1200px;width:150px;text-align:right;font-size:10.6px;line-height:11.84px;color:#1a1a1a;">6 hours (18:39 - 0:39)</div>
<svg class="r" style="left:1353px;top:404px" width="13" height="13"><circle cx="6.2" cy="6.2" r="5.6" fill="#dcdcdc"/><path d="M3.6 5 L6.2 7.5 L8.8 5" fill="none" stroke="#9a9a9a" stroke-width="1.1"/></svg>
<div class="t" style="top:415px;left:-1.1999999999999993px;width:30px;text-align:right;font-size:10.6px;line-height:11.84px;color:#1a1a1a;">90</div>
<div class="t" style="top:442px;left:-1.1999999999999993px;width:30px;text-align:right;font-size:10.6px;line-height:11.84px;color:#1a1a1a;">0</div>
<div class="t" style="left:19.5px;top:441.5px;font-size:10px;line-height:10px;color:#1a1a1a;transform-origin:0 0;transform:rotate(-90deg);">ms</div>
<div class="t" style="top:417px;left:1377px;font-size:10.5px;line-height:11.73px;color:#9a3636;">1</div>
<svg class="r" style="left:0px;top:405px" width="1395" height="62"><rect x="31" y="12" width="1344" height="36" fill="#ddeed5"/><rect x="524.5" y="12" width="1" height="36" fill="#c4c4c4"/><rect x="527.2" y="12" width="1" height="36" fill="#c4c4c4"/><rect x="530.1" y="12" width="1" height="36" fill="#c4c4c4"/><rect x="548.3" y="12" width="1" height="36" fill="#c4c4c4"/><rect x="602.5" y="12" width="1" height="36" fill="#c4c4c4"/><rect x="605.5" y="12" width="1" height="36" fill="#c4c4c4"/><rect x="1361.2" y="12" width="1" height="36" fill="#c4c4c4"/><rect x="74" y="12" width="3" height="36" fill="#f2b4a4" opacity="0.75"/><rect x="75" y="12" width="1" height="36" fill="#8e2b22"/><rect x="165" y="12" width="3" height="36" fill="#f2b4a4" opacity="0.75"/><rect x="166" y="12" width="1" height="36" fill="#8e2b22"/><rect x="210" y="12" width="3" height="36" fill="#f2b4a4" opacity="0.75"/><rect x="211" y="12" width="1" height="36" fill="#8e2b22"/><rect x="222" y="12" width="3" height="36" fill="#f2b4a4" opacity="0.75"/><rect x="223" y="12" width="1" height="36" fill="#8e2b22"/><rect x="280" y="12" width="3" height="36" fill="#f2b4a4" opacity="0.75"/><rect x="281" y="12" width="1" height="36" fill="#8e2b22"/><rect x="338" y="12" width="3" height="36" fill="#f2b4a4" opacity="0.75"/><rect x="339" y="12" width="1" height="36" fill="#8e2b22"/><rect x="471" y="12" width="3" height="36" fill="#f2b4a4" opacity="0.75"/><rect x="472" y="12" width="1" height="36" fill="#8e2b22"/><rect x="564" y="12" width="3" height="36" fill="#f2b4a4" opacity="0.75"/><rect x="565" y="12" width="1" height="36" fill="#8e2b22"/><rect x="815" y="12" width="3" height="36" fill="#f2b4a4" opacity="0.75"/><rect x="816" y="12" width="1" height="36" fill="#8e2b22"/><rect x="1041" y="12" width="3" height="36" fill="#f2b4a4" opacity="0.75"/><rect x="1042" y="12" width="1" height="36" fill="#8e2b22"/><rect x="1068" y="12" width="3" height="36" fill="#f2b4a4" opacity="0.75"/><rect x="1069" y="12" width="1" height="36" fill="#8e2b22"/><rect x="1165" y="12" width="3" height="36" fill="#f2b4a4" opacity="0.75"/><rect x="1166" y="12" width="1" height="36" fill="#8e2b22"/><rect x="1269" y="12" width="3" height="36" fill="#f2b4a4" opacity="0.75"/><rect x="1270" y="12" width="1" height="36" fill="#8e2b22"/><rect x="1271" y="12" width="3" height="36" fill="#f2b4a4" opacity="0.75"/><rect x="1272" y="12" width="1" height="36" fill="#8e2b22"/><rect x="1319" y="12" width="3" height="36" fill="#f2b4a4" opacity="0.75"/><rect x="1320" y="12" width="1" height="36" fill="#8e2b22"/><rect x="1365" y="12" width="5" height="36" fill="#f2b4a4" opacity="0.75"/><rect x="1366.5" y="12" width="2.5" height="36" fill="#95201a"/><path d="M32 38 H1375" fill="none" stroke="#0a0a0a" stroke-width="2" shape-rendering="crispEdges"/><path d=" M32 36 h1 v1 h-1 Z M50 36 h2 v1 h-2 Z M63 39 h1 v1 h-1 Z M68 36 h2 v1 h-2 Z M88 36 h2 v1 h-2 Z M135 36 h2 v1 h-2 Z M139 36 h1 v1 h-1 Z M141 36 h2 v1 h-2 Z M143 39 h1 v1 h-1 Z M145 39 h1 v1 h-1 Z M152 36 h1 v1 h-1 Z M157 36 h2 v1 h-2 Z M161 39 h2 v1 h-2 Z M163 35 h1 v2 h-1 Z M171 39 h3 v1 h-3 Z M177 36 h1 v1 h-1 Z M181 36 h1 v1 h-1 Z M188 36 h1 v1 h-1 Z M191 36 h2 v1 h-2 Z M194 36 h1 v1 h-1 Z M200 35 h2 v2 h-2 Z M207 36 h1 v1 h-1 Z M221 36 h1 v1 h-1 Z M223 36 h2 v1 h-2 Z M229 35 h1 v2 h-1 Z M235 36 h1 v1 h-1 Z M237 35 h2 v2 h-2 Z M247 36 h1 v1 h-1 Z M249 36 h1 v1 h-1 Z M251 39 h3 v1 h-3 Z M254 36 h1 v1 h-1 Z M256 35 h1 v2 h-1 Z M267 36 h1 v1 h-1 Z M273 35 h1 v2 h-1 Z M274 39 h3 v1 h-3 Z M279 36 h1 v1 h-1 Z M281 39 h1 v1 h-1 Z M283 36 h1 v1 h-1 Z M293 39 h1 v1 h-1 Z M294 39 h1 v1 h-1 Z M306 36 h1 v1 h-1 Z M308 36 h1 v1 h-1 Z M312 36 h1 v1 h-1 Z M315 36 h1 v1 h-1 Z M318 39 h1 v1 h-1 Z M326 36 h1 v1 h-1 Z M332 36 h1 v1 h-1 Z M334 35 h1 v2 h-1 Z M337 36 h1 v1 h-1 Z M340 36 h2 v1 h-2 Z M345 39 h2 v1 h-2 Z M355 36 h1 v1 h-1 Z M363 35 h2 v2 h-2 Z M367 35 h1 v2 h-1 Z M380 39 h1 v1 h-1 Z M402 39 h2 v1 h-2 Z M411 36 h1 v1 h-1 Z M427 36 h1 v1 h-1 Z M431 36 h1 v1 h-1 Z M438 35 h1 v2 h-1 Z M446 35 h1 v2 h-1 Z M494 35 h1 v2 h-1 Z M497 39 h1 v1 h-1 Z M500 35 h1 v2 h-1 Z M501 36 h2 v1 h-2 Z M510 36 h2 v1 h-2 Z M514 36 h2 v1 h-2 Z M521 36 h1 v1 h-1 Z M523 39 h3 v1 h-3 Z M536 36 h2 v1 h-2 Z M545 35 h1 v2 h-1 Z M550 39 h3 v1 h-3 Z M554 35 h1 v2 h-1 Z M558 36 h2 v1 h-2 Z M568 36 h2 v1 h-2 Z M569 39 h1 v1 h-1 Z M582 36 h2 v1 h-2 Z M586 35 h1 v2 h-1 Z M593 36 h2 v1 h-2 Z M594 36 h1 v1 h-1 Z M597 39 h1 v1 h-1 Z M605 36 h1 v1 h-1 Z M608 35 h1 v2 h-1 Z M619 39 h3 v1 h-3 Z M630 39 h1 v1 h-1 Z M632 35 h1 v2 h-1 Z M633 35 h1 v2 h-1 Z M635 36 h1 v1 h-1 Z M646 36 h2 v1 h-2 Z M647 39 h2 v1 h-2 Z M651 36 h1 v1 h-1 Z M653 39 h2 v1 h-2 Z M656 36 h1 v1 h-1 Z M664 35 h2 v2 h-2 Z M671 36 h1 v1 h-1 Z M672 36 h2 v1 h-2 Z M675 39 h2 v1 h-2 Z M692 35 h2 v2 h-2 Z M705 36 h1 v1 h-1 Z M714 39 h3 v1 h-3 Z M722 35 h1 v2 h-1 Z M724 35 h1 v2 h-1 Z M740 35 h2 v2 h-2 Z M744 36 h1 v1 h-1 Z M760 39 h1 v1 h-1 Z M767 39 h3 v1 h-3 Z M772 39 h2 v1 h-2 Z M793 39 h3 v1 h-3 Z M800 35 h1 v2 h-1 Z M803 36 h1 v1 h-1 Z M805 39 h1 v1 h-1 Z M806 39 h2 v1 h-2 Z M821 36 h2 v1 h-2 Z M834 36 h1 v1 h-1 Z M846 36 h2 v1 h-2 Z M848 35 h2 v2 h-2 Z M851 39 h2 v1 h-2 Z M856 36 h1 v1 h-1 Z M864 39 h3 v1 h-3 Z M866 39 h1 v1 h-1 Z M872 39 h1 v1 h-1 Z M886 36 h1 v1 h-1 Z M888 36 h2 v1 h-2 Z M899 36 h1 v1 h-1 Z M901 39 h3 v1 h-3 Z M904 36 h1 v1 h-1 Z M906 36 h1 v1 h-1 Z M908 36 h2 v1 h-2 Z M914 35 h1 v2 h-1 Z M918 36 h1 v1 h-1 Z M936 36 h2 v1 h-2 Z M938 39 h2 v1 h-2 Z M949 36 h2 v1 h-2 Z M955 36 h2 v1 h-2 Z M961 35 h1 v2 h-1 Z M964 36 h2 v1 h-2 Z M966 39 h3 v1 h-3 Z M977 39 h2 v1 h-2 Z M983 36 h1 v1 h-1 Z M993 36 h1 v1 h-1 Z M998 39 h3 v1 h-3 Z M1010 36 h2 v1 h-2 Z M1023 36 h1 v1 h-1 Z M1040 35 h1 v2 h-1 Z M1065 36 h2 v1 h-2 Z M1071 39 h2 v1 h-2 Z M1077 36 h2 v1 h-2 Z M1078 35 h1 v2 h-1 Z M1099 39 h2 v1 h-2 Z M1106 39 h2 v1 h-2 Z M1109 39 h2 v1 h-2 Z M1110 36 h1 v1 h-1 Z M1112 36 h2 v1 h-2 Z M1122 36 h1 v1 h-1 Z M1123 35 h1 v2 h-1 Z M1132 35 h1 v2 h-1 Z M1136 39 h3 v1 h-3 Z M1140 36 h1 v1 h-1 Z M1143 36 h2 v1 h-2 Z M1150 36 h1 v1 h-1 Z M1156 36 h2 v1 h-2 Z M1169 39 h3 v1 h-3 Z M1181 36 h1 v1 h-1 Z M1189 36 h2 v1 h-2 Z M1201 39 h3 v1 h-3 Z M1211 36 h1 v1 h-1 Z M1214 39 h2 v1 h-2 Z M1221 36 h1 v1 h-1 Z M1225 36 h2 v1 h-2 Z M1230 36 h2 v1 h-2 Z M1256 36 h1 v1 h-1 Z M1262 36 h1 v1 h-1 Z M1265 36 h1 v1 h-1 Z M1267 35 h1 v2 h-1 Z M1277 36 h1 v1 h-1 Z M1285 36 h1 v1 h-1 Z M1290 36 h1 v1 h-1 Z M1295 36 h2 v1 h-2 Z M1297 36 h2 v1 h-2 Z M1298 39 h1 v1 h-1 Z M1300 36 h2 v1 h-2 Z M1307 36 h1 v1 h-1 Z M1314 36 h1 v1 h-1 Z M1322 35 h2 v2 h-2 Z M1337 39 h1 v1 h-1 Z M1352 36 h1 v1 h-1 Z M1353 39 h3 v1 h-3 Z M1358 36 h1 v1 h-1 Z M1360 36 h2 v1 h-2 Z M1365 36 h2 v1 h-2 Z M789 31 h1 v7 h-1 Z M805.5 33 h1 v5 h-1 Z M585 35 h1 v3 h-1 Z M1120 35 h1 v3 h-1 Z" fill="#0a0a0a" shape-rendering="crispEdges"/><rect x="31" y="12" width="1" height="37" fill="#555"/><rect x="31" y="48" width="1344" height="1" fill="#555"/><rect x="52" y="48" width="1" height="3" fill="#555"/><rect x="108" y="48" width="1" height="3" fill="#555"/><rect x="164" y="48" width="1" height="3" fill="#555"/><rect x="220" y="48" width="1" height="3" fill="#555"/><rect x="276" y="48" width="1" height="3" fill="#555"/><rect x="332" y="48" width="1" height="3" fill="#555"/><rect x="388" y="48" width="1" height="3" fill="#555"/><rect x="444" y="48" width="1" height="3" fill="#555"/><rect x="500" y="48" width="1" height="3" fill="#555"/><rect x="556" y="48" width="1" height="3" fill="#555"/><rect x="612" y="48" width="1" height="3" fill="#555"/><rect x="668" y="48" width="1" height="3" fill="#555"/><rect x="724" y="48" width="1" height="3" fill="#555"/><rect x="780" y="48" width="1" height="3" fill="#555"/><rect x="836" y="48" width="1" height="3" fill="#555"/><rect x="892" y="48" width="1" height="3" fill="#555"/><rect x="948" y="48" width="1" height="3" fill="#555"/><rect x="1004" y="48" width="1" height="3" fill="#555"/><rect x="1060" y="48" width="1" height="3" fill="#555"/><rect x="1116" y="48" width="1" height="3" fill="#555"/><rect x="1172" y="48" width="1" height="3" fill="#555"/><rect x="1228" y="48" width="1" height="3" fill="#555"/><rect x="1284" y="48" width="1" height="3" fill="#555"/><rect x="1340" y="48" width="1" height="3" fill="#555"/></svg>
<div class="t" style="top:455px;left:39.6px;font-size:10.4px;line-height:11.62px;color:#2f552f;">18:45</div>
<div class="t" style="top:455px;left:95.6px;font-size:10.4px;line-height:11.62px;color:#2f552f;">19:00</div>
<div class="t" style="top:455px;left:151.6px;font-size:10.4px;line-height:11.62px;color:#2f552f;">19:15</div>
<div class="t" style="top:455px;left:207.6px;font-size:10.4px;line-height:11.62px;color:#2f552f;">19:30</div>
<div class="t" style="top:455px;left:263.6px;font-size:10.4px;line-height:11.62px;color:#2f552f;">19:45</div>
<div class="t" style="top:455px;left:319.5px;font-size:10.4px;line-height:11.62px;color:#2f552f;">20:00</div>
<div class="t" style="top:455px;left:375.5px;font-size:10.4px;line-height:11.62px;color:#2f552f;">20:15</div>
<div class="t" style="top:455px;left:431.5px;font-size:10.4px;line-height:11.62px;color:#2f552f;">20:30</div>
<div class="t" style="top:455px;left:487.5px;font-size:10.4px;line-height:11.62px;color:#2f552f;">20:45</div>
<div class="t" style="top:455px;left:543.5px;font-size:10.4px;line-height:11.62px;color:#2f552f;">21:00</div>
<div class="t" style="top:455px;left:599.5px;font-size:10.4px;line-height:11.62px;color:#2f552f;">21:15</div>
<div class="t" style="top:455px;left:655.5px;font-size:10.4px;line-height:11.62px;color:#2f552f;">21:30</div>
<div class="t" style="top:455px;left:711.5px;font-size:10.4px;line-height:11.62px;color:#2f552f;">21:45</div>
<div class="t" style="top:455px;left:767.5px;font-size:10.4px;line-height:11.62px;color:#2f552f;">22:00</div>
<div class="t" style="top:455px;left:823.5px;font-size:10.4px;line-height:11.62px;color:#2f552f;">22:15</div>
<div class="t" style="top:455px;left:879.4px;font-size:10.4px;line-height:11.62px;color:#2f552f;">22:30</div>
<div class="t" style="top:455px;left:935.4px;font-size:10.4px;line-height:11.62px;color:#2f552f;">22:45</div>
<div class="t" style="top:455px;left:991.4px;font-size:10.4px;line-height:11.62px;color:#2f552f;">23:00</div>
<div class="t" style="top:455px;left:1047.4px;font-size:10.4px;line-height:11.62px;color:#2f552f;">23:15</div>
<div class="t" style="top:455px;left:1103.4px;font-size:10.4px;line-height:11.62px;color:#2f552f;">23:30</div>
<div class="t" style="top:455px;left:1159.4px;font-size:10.4px;line-height:11.62px;color:#2f552f;">23:45</div>
<div class="t" style="top:455px;left:1221.2px;font-size:10.4px;line-height:11.62px;color:#2f552f;">0:00</div>
<div class="t" style="top:455px;left:1277.2px;font-size:10.4px;line-height:11.62px;color:#2f552f;">0:15</div>
<div class="t" style="top:455px;left:1333.2px;font-size:10.4px;line-height:11.62px;color:#2f552f;">0:30</div>
<div class="t" style="top:474px;left:31px;font-size:10.95px;line-height:12.23px;color:#1a1a1a;">sto-bb1-link.ip.twelve99.net (62.115.143.28) hop 9</div>
<div class="t" style="top:475px;left:1200px;width:150px;text-align:right;font-size:10.6px;line-height:11.84px;color:#1a1a1a;">6 hours (18:39 - 0:39)</div>
<svg class="r" style="left:1353px;top:474px" width="13" height="13"><circle cx="6.2" cy="6.2" r="5.6" fill="#dcdcdc"/><path d="M3.6 5 L6.2 7.5 L8.8 5" fill="none" stroke="#9a9a9a" stroke-width="1.1"/></svg>
<div class="t" style="top:485px;left:-1.1999999999999993px;width:30px;text-align:right;font-size:10.6px;line-height:11.84px;color:#1a1a1a;">90</div>
<div class="t" style="top:512px;left:-1.1999999999999993px;width:30px;text-align:right;font-size:10.6px;line-height:11.84px;color:#1a1a1a;">0</div>
<div class="t" style="left:19.5px;top:511.5px;font-size:10px;line-height:10px;color:#1a1a1a;transform-origin:0 0;transform:rotate(-90deg);">ms</div>
<div class="t" style="top:487px;left:1377px;font-size:10.5px;line-height:11.73px;color:#9a3636;">1</div>
<svg class="r" style="left:0px;top:475px" width="1395" height="62"><rect x="31" y="12" width="1344" height="36" fill="#ddeed5"/><rect x="524.5" y="12" width="1" height="36" fill="#c4c4c4"/><rect x="527.2" y="12" width="1" height="36" fill="#c4c4c4"/><rect x="530.1" y="12" width="1" height="36" fill="#c4c4c4"/><rect x="548.3" y="12" width="1" height="36" fill="#c4c4c4"/><rect x="602.5" y="12" width="1" height="36" fill="#c4c4c4"/><rect x="605.5" y="12" width="1" height="36" fill="#c4c4c4"/><rect x="1361.2" y="12" width="1" height="36" fill="#c4c4c4"/><rect x="135" y="12" width="3" height="36" fill="#f2b4a4" opacity="0.75"/><rect x="136" y="12" width="1" height="36" fill="#8e2b22"/><rect x="191" y="12" width="3" height="36" fill="#f2b4a4" opacity="0.75"/><rect x="192" y="12" width="1" height="36" fill="#8e2b22"/><rect x="280" y="12" width="3" height="36" fill="#f2b4a4" opacity="0.75"/><rect x="281" y="12" width="1" height="36" fill="#8e2b22"/><rect x="673" y="12" width="3" height="36" fill="#f2b4a4" opacity="0.75"/><rect x="674" y="12" width="1" height="36" fill="#8e2b22"/><rect x="732" y="12" width="3" height="36" fill="#f2b4a4" opacity="0.75"/><rect x="733" y="12" width="1" height="36" fill="#8e2b22"/><rect x="864" y="12" width="3" height="36" fill="#f2b4a4" opacity="0.75"/><rect x="865" y="12" width="1" height="36" fill="#8e2b22"/><rect x="1365" y="12" width="5" height="36" fill="#f2b4a4" opacity="0.75"/><rect x="1366.5" y="12" width="2.5" height="36" fill="#95201a"/><path d="M32 31 H1375" fill="none" stroke="#0a0a0a" stroke-width="2" shape-rendering="crispEdges"/><path d=" M33 29 h1 v1 h-1 Z M35 32 h1 v1 h-1 Z M58 32 h1 v1 h-1 Z M60 29 h2 v1 h-2 Z M72 28 h1 v2 h-1 Z M110 29 h2 v1 h-2 Z M119 29 h1 v1 h-1 Z M122 29 h1 v1 h-1 Z M132 29 h1 v1 h-1 Z M135 32 h2 v1 h-2 Z M144 29 h2 v1 h-2 Z M145 28 h1 v2 h-1 Z M152 32 h3 v1 h-3 Z M159 29 h1 v1 h-1 Z M166 32 h3 v1 h-3 Z M170 32 h2 v1 h-2 Z M173 28 h1 v2 h-1 Z M175 29 h2 v1 h-2 Z M177 29 h1 v1 h-1 Z M179 28 h1 v2 h-1 Z M185 28 h1 v2 h-1 Z M202 29 h1 v1 h-1 Z M208 29 h1 v1 h-1 Z M211 29 h1 v1 h-1 Z M222 29 h1 v1 h-1 Z M226 28 h2 v2 h-2 Z M230 32 h2 v1 h-2 Z M248 29 h1 v1 h-1 Z M253 28 h1 v2 h-1 Z M259 28 h2 v2 h-2 Z M264 28 h1 v2 h-1 Z M280 32 h3 v1 h-3 Z M301 28 h1 v2 h-1 Z M306 32 h3 v1 h-3 Z M310 28 h2 v2 h-2 Z M313 32 h3 v1 h-3 Z M330 29 h1 v1 h-1 Z M335 32 h3 v1 h-3 Z M337 28 h1 v2 h-1 Z M342 28 h2 v2 h-2 Z M354 29 h1 v1 h-1 Z M381 29 h1 v1 h-1 Z M391 28 h1 v2 h-1 Z M395 29 h1 v1 h-1 Z M397 32 h3 v1 h-3 Z M402 32 h3 v1 h-3 Z M420 29 h1 v1 h-1 Z M422 28 h1 v2 h-1 Z M442 29 h1 v1 h-1 Z M455 29 h2 v1 h-2 Z M460 32 h1 v1 h-1 Z M475 28 h1 v2 h-1 Z M481 29 h2 v1 h-2 Z M486 32 h3 v1 h-3 Z M488 32 h1 v1 h-1 Z M494 29 h1 v1 h-1 Z M496 29 h2 v1 h-2 Z M497 29 h1 v1 h-1 Z M499 29 h1 v1 h-1 Z M503 29 h1 v1 h-1 Z M516 29 h1 v1 h-1 Z M521 29 h1 v1 h-1 Z M525 32 h3 v1 h-3 Z M533 29 h2 v1 h-2 Z M535 29 h2 v1 h-2 Z M546 29 h1 v1 h-1 Z M556 29 h1 v1 h-1 Z M565 29 h1 v1 h-1 Z M592 32 h3 v1 h-3 Z M598 29 h1 v1 h-1 Z M600 29 h2 v1 h-2 Z M604 32 h3 v1 h-3 Z M606 28 h1 v2 h-1 Z M613 29 h1 v1 h-1 Z M623 32 h1 v1 h-1 Z M635 32 h1 v1 h-1 Z M637 29 h2 v1 h-2 Z M638 28 h2 v2 h-2 Z M641 32 h2 v1 h-2 Z M652 32 h1 v1 h-1 Z M655 29 h2 v1 h-2 Z M666 29 h2 v1 h-2 Z M669 29 h2 v1 h-2 Z M681 28 h1 v2 h-1 Z M696 29 h1 v1 h-1 Z M700 29 h2 v1 h-2 Z M702 32 h1 v1 h-1 Z M703 29 h1 v1 h-1 Z M707 28 h2 v2 h-2 Z M712 28 h1 v2 h-1 Z M714 29 h2 v1 h-2 Z M720 29 h2 v1 h-2 Z M722 29 h1 v1 h-1 Z M742 32 h3 v1 h-3 Z M759 28 h2 v2 h-2 Z M762 28 h2 v2 h-2 Z M769 29 h1 v1 h-1 Z M779 32 h3 v1 h-3 Z M783 29 h1 v1 h-1 Z M800 29 h1 v1 h-1 Z M801 28 h1 v2 h-1 Z M804 32 h3 v1 h-3 Z M806 28 h1 v2 h-1 Z M811 29 h1 v1 h-1 Z M819 29 h1 v1 h-1 Z M826 29 h1 v1 h-1 Z M835 28 h1 v2 h-1 Z M840 29 h1 v1 h-1 Z M847 29 h1 v1 h-1 Z M849 29 h1 v1 h-1 Z M851 32 h1 v1 h-1 Z M853 29 h1 v1 h-1 Z M860 29 h1 v1 h-1 Z M867 29 h1 v1 h-1 Z M881 28 h2 v2 h-2 Z M889 29 h2 v1 h-2 Z M890 29 h1 v1 h-1 Z M896 29 h1 v1 h-1 Z M912 29 h1 v1 h-1 Z M918 29 h2 v1 h-2 Z M923 29 h1 v1 h-1 Z M929 29 h1 v1 h-1 Z M931 29 h1 v1 h-1 Z M937 29 h1 v1 h-1 Z M954 29 h1 v1 h-1 Z M967 29 h1 v1 h-1 Z M973 32 h2 v1 h-2 Z M981 29 h1 v1 h-1 Z M995 32 h3 v1 h-3 Z M999 32 h1 v1 h-1 Z M1010 28 h2 v2 h-2 Z M1011 29 h1 v1 h-1 Z M1021 32 h3 v1 h-3 Z M1023 29 h1 v1 h-1 Z M1031 29 h2 v1 h-2 Z M1038 29 h1 v1 h-1 Z M1043 29 h1 v1 h-1 Z M1045 29 h2 v1 h-2 Z M1047 29 h1 v1 h-1 Z M1051 29 h2 v1 h-2 Z M1054 29 h1 v1 h-1 Z M1059 32 h1 v1 h-1 Z M1060 29 h2 v1 h-2 Z M1063 29 h1 v1 h-1 Z M1065 32 h3 v1 h-3 Z M1074 29 h1 v1 h-1 Z M1075 29 h2 v1 h-2 Z M1077 32 h2 v1 h-2 Z M1083 32 h3 v1 h-3 Z M1096 29 h1 v1 h-1 Z M1099 29 h1 v1 h-1 Z M1106 29 h1 v1 h-1 Z M1109 29 h2 v1 h-2 Z M1114 29 h1 v1 h-1 Z M1117 29 h1 v1 h-1 Z M1118 28 h1 v2 h-1 Z M1123 29 h1 v1 h-1 Z M1128 29 h1 v1 h-1 Z M1131 29 h1 v1 h-1 Z M1145 29 h1 v1 h-1 Z M1151 32 h3 v1 h-3 Z M1156 29 h1 v1 h-1 Z M1177 32 h2 v1 h-2 Z M1187 32 h3 v1 h-3 Z M1196 29 h1 v1 h-1 Z M1200 29 h1 v1 h-1 Z M1205 29 h1 v1 h-1 Z M1208 29 h1 v1 h-1 Z M1215 29 h1 v1 h-1 Z M1218 29 h1 v1 h-1 Z M1220 32 h1 v1 h-1 Z M1230 29 h1 v1 h-1 Z M1236 29 h1 v1 h-1 Z M1244 29 h1 v1 h-1 Z M1245 32 h2 v1 h-2 Z M1263 32 h1 v1 h-1 Z M1267 29 h1 v1 h-1 Z M1271 29 h1 v1 h-1 Z M1275 32 h2 v1 h-2 Z M1277 32 h2 v1 h-2 Z M1283 29 h1 v1 h-1 Z M1296 29 h1 v1 h-1 Z M1302 29 h2 v1 h-2 Z M1303 32 h1 v1 h-1 Z M1317 32 h2 v1 h-2 Z M1320 29 h1 v1 h-1 Z M1328 29 h1 v1 h-1 Z M1336 29 h1 v1 h-1 Z M1341 29 h1 v1 h-1 Z M1358 29 h2 v1 h-2 Z M1363 29 h1 v1 h-1 Z M1368 28 h1 v2 h-1 Z M1374 28 h2 v2 h-2 Z M600 27 h1 v4 h-1 Z M639 26 h1 v5 h-1 Z M746.5 23 h1 v8 h-1 Z M769 22 h1 v9 h-1 Z M789 25 h1 v6 h-1 Z M805.5 25 h1 v6 h-1 Z M955 23 h1 v8 h-1 Z M1248 23 h1 v8 h-1 Z" fill="#0a0a0a" shape-rendering="crispEdges"/><rect x="31" y="12" width="1" height="37" fill="#555"/><rect x="31" y="48" width="1344" height="1" fill="#555"/><rect x="52" y="48" width="1" height="3" fill="#555"/><rect x="108" y="48" width="1" height="3" fill="#555"/><rect x="164" y="48" width="1" height="3" fill="#555"/><rect x="220" y="48" width="1" height="3" fill="#555"/><rect x="276" y="48" width="1" height="3" fill="#555"/><rect x="332" y="48" width="1" height="3" fill="#555"/><rect x="388" y="48" width="1" height="3" fill="#555"/><rect x="444" y="48" width="1" height="3" fill="#555"/><rect x="500" y="48" width="1" height="3" fill="#555"/><rect x="556" y="48" width="1" height="3" fill="#555"/><rect x="612" y="48" width="1" height="3" fill="#555"/><rect x="668" y="48" width="1" height="3" fill="#555"/><rect x="724" y="48" width="1" height="3" fill="#555"/><rect x="780" y="48" width="1" height="3" fill="#555"/><rect x="836" y="48" width="1" height="3" fill="#555"/><rect x="892" y="48" width="1" height="3" fill="#555"/><rect x="948" y="48" width="1" height="3" fill="#555"/><rect x="1004" y="48" width="1" height="3" fill="#555"/><rect x="1060" y="48" width="1" height="3" fill="#555"/><rect x="1116" y="48" width="1" height="3" fill="#555"/><rect x="1172" y="48" width="1" height="3" fill="#555"/><rect x="1228" y="48" width="1" height="3" fill="#555"/><rect x="1284" y="48" width="1" height="3" fill="#555"/><rect x="1340" y="48" width="1" height="3" fill="#555"/></svg>
<div class="t" style="top:525px;left:39.6px;font-size:10.4px;line-height:11.62px;color:#2f552f;">18:45</div>
<div class="t" style="top:525px;left:95.6px;font-size:10.4px;line-height:11.62px;color:#2f552f;">19:00</div>
<div class="t" style="top:525px;left:151.6px;font-size:10.4px;line-height:11.62px;color:#2f552f;">19:15</div>
<div class="t" style="top:525px;left:207.6px;font-size:10.4px;line-height:11.62px;color:#2f552f;">19:30</div>
<div class="t" style="top:525px;left:263.6px;font-size:10.4px;line-height:11.62px;color:#2f552f;">19:45</div>
<div class="t" style="top:525px;left:319.5px;font-size:10.4px;line-height:11.62px;color:#2f552f;">20:00</div>
<div class="t" style="top:525px;left:375.5px;font-size:10.4px;line-height:11.62px;color:#2f552f;">20:15</div>
<div class="t" style="top:525px;left:431.5px;font-size:10.4px;line-height:11.62px;color:#2f552f;">20:30</div>
<div class="t" style="top:525px;left:487.5px;font-size:10.4px;line-height:11.62px;color:#2f552f;">20:45</div>
<div class="t" style="top:525px;left:543.5px;font-size:10.4px;line-height:11.62px;color:#2f552f;">21:00</div>
<div class="t" style="top:525px;left:599.5px;font-size:10.4px;line-height:11.62px;color:#2f552f;">21:15</div>
<div class="t" style="top:525px;left:655.5px;font-size:10.4px;line-height:11.62px;color:#2f552f;">21:30</div>
<div class="t" style="top:525px;left:711.5px;font-size:10.4px;line-height:11.62px;color:#2f552f;">21:45</div>
<div class="t" style="top:525px;left:767.5px;font-size:10.4px;line-height:11.62px;color:#2f552f;">22:00</div>
<div class="t" style="top:525px;left:823.5px;font-size:10.4px;line-height:11.62px;color:#2f552f;">22:15</div>
<div class="t" style="top:525px;left:879.4px;font-size:10.4px;line-height:11.62px;color:#2f552f;">22:30</div>
<div class="t" style="top:525px;left:935.4px;font-size:10.4px;line-height:11.62px;color:#2f552f;">22:45</div>
<div class="t" style="top:525px;left:991.4px;font-size:10.4px;line-height:11.62px;color:#2f552f;">23:00</div>
<div class="t" style="top:525px;left:1047.4px;font-size:10.4px;line-height:11.62px;color:#2f552f;">23:15</div>
<div class="t" style="top:525px;left:1103.4px;font-size:10.4px;line-height:11.62px;color:#2f552f;">23:30</div>
<div class="t" style="top:525px;left:1159.4px;font-size:10.4px;line-height:11.62px;color:#2f552f;">23:45</div>
<div class="t" style="top:525px;left:1221.2px;font-size:10.4px;line-height:11.62px;color:#2f552f;">0:00</div>
<div class="t" style="top:525px;left:1277.2px;font-size:10.4px;line-height:11.62px;color:#2f552f;">0:15</div>
<div class="t" style="top:525px;left:1333.2px;font-size:10.4px;line-height:11.62px;color:#2f552f;">0:30</div>
<div class="t" style="top:544px;left:31px;font-size:10.95px;line-height:12.23px;color:#1a1a1a;">sto-b9-link.ip.twelve99.net (62.115.139.181) hop 10</div>
<div class="t" style="top:545px;left:1200px;width:150px;text-align:right;font-size:10.6px;line-height:11.84px;color:#1a1a1a;">6 hours (18:39 - 0:39)</div>
<svg class="r" style="left:1353px;top:544px" width="13" height="13"><circle cx="6.2" cy="6.2" r="5.6" fill="#dcdcdc"/><path d="M3.6 5 L6.2 7.5 L8.8 5" fill="none" stroke="#9a9a9a" stroke-width="1.1"/></svg>
<div class="t" style="top:555px;left:-1.1999999999999993px;width:30px;text-align:right;font-size:10.6px;line-height:11.84px;color:#1a1a1a;">90</div>
<div class="t" style="top:582px;left:-1.1999999999999993px;width:30px;text-align:right;font-size:10.6px;line-height:11.84px;color:#1a1a1a;">0</div>
<div class="t" style="left:19.5px;top:581.5px;font-size:10px;line-height:10px;color:#1a1a1a;transform-origin:0 0;transform:rotate(-90deg);">ms</div>
<div class="t" style="top:557px;left:1377px;font-size:10.5px;line-height:11.73px;color:#9a3636;">1</div>
<svg class="r" style="left:0px;top:545px" width="1395" height="62"><rect x="31" y="12" width="1344" height="36" fill="#fe0000"/><rect x="31" y="12" width="1344" height="1" fill="#c00000"/><rect x="523.0" y="12" width="1.5" height="36" fill="#fff"/><path d="M32 29 H33 V29 H34 V29 H37 V29 H39 V29 H40 V29 H42 V29 H45 V28 H46 V29 H49 V29 H50 V29 H52 V29 H54 V28 H56 V29 H58 V29 H59 V29 H60 V29 H61 V29 H63 V29 H66 V29 H69 V29 H70 V29 H73 V29 H74 V29 H76 V29 H79 V29 H80 V29 H83 V29 H84 V28 H86 V29 H88 V29 H89 V29 H90 V29 H92 V29 H94 V29 H96 V28 H97 V29 H98 V29 H99 V29 H101 V29 H102 V29 H104 V29 H106 V29 H109 V29 H110 V29 H113 V29 H115 V29 H118 V29 H119 V29 H122 V29 H125 V29 H126 V29 H128 V29 H131 V29 H133 V29 H134 V29 H136 V29 H138 V29 H140 V29 H142 V29 H145 V29 H146 V29 H147 V29 H148 V29 H150 V29 H152 V29 H153 V29 H155 V29 H156 V29 H157 V29 H160 V28 H161 V29 H162 V29 H163 V29 H165 V29 H168 V29 H170 V29 H172 V29 H174 V29 H175 V29 H176 V29 H179 V29 H181 V29 H182 V29 H185 V29 H188 V29 H189 V29 H191 V29 H192 V29 H194 V29 H195 V28 H196 V29 H197 V29 H200 V29 H201 V29 H204 V29 H206 V29 H209 V28 H210 V29 H211 V29 H212 V29 H213 V29 H214 V28 H217 V29 H218 V29 H219 V29 H220 V28 H221 V29 H222 V29 H223 V28 H224 V29 H225 V28 H227 V29 H228 V29 H231 V29 H232 V29 H234 V29 H236 V29 H239 V29 H241 V29 H244 V29 H247 V29 H248 V29 H250 V29 H252 V29 H255 V29 H257 V29 H258 V29 H260 V29 H263 V29 H265 V29 H268 V29 H269 V29 H272 V29 H275 V29 H277 V29 H278 V29 H281 V29 H282 V29 H284 V29 H285 V29 H287 V29 H289 V29 H290 V29 H291 V29 H292 V29 H293 V29 H296 V29 H297 V29 H298 V28 H300 V29 H302 V29 H303 V29 H305 V29 H306 V29 H307 V29 H308 V29 H310 V29 H313 V29 H316 V29 H317 V29 H318 V29 H320 V29 H323 V29 H325 V29 H327 V29 H330 V29 H332 V29 H334 V29 H336 V29 H337 V29 H339 V29 H341 V29 H342 V28 H345 V29 H346 V29 H348 V29 H349 V28 H350 V29 H351 V29 H353 V29 H355 V29 H357 V29 H359 V29 H360 V29 H362 V29 H365 V29 H367 V29 H369 V29 H370 V29 H372 V29 H373 V29 H374 V29 H375 V29 H376 V29 H378 V29 H380 V29 H382 V29 H384 V29 H387 V29 H388 V29 H391 V29 H394 V29 H395 V29 H396 V29 H398 V29 H401 V29 H402 V28 H404 V29 H405 V29 H408 V29 H410 V29 H412 V29 H413 V28 H415 V29 H417 V29 H419 V29 H420 V29 H421 V29 H422 V29 H423 V29 H426 V29 H427 V29 H428 V29 H429 V29 H430 V29 H431 V29 H433 V29 H434 V29 H436 V29 H438 V29 H440 V29 H442 V29 H444 V29 H445 V29 H447 V29 H448 V29 H449 V29 H451 V29 H452 V29 H455 V29 H456 V29 H459 V29 H461 V29 H462 V29 H463 V29 H465 V29 H466 V29 H467 V29 H469 V29 H471 V29 H472 V29 H473 V29 H475 V29 H477 V29 H479 V29 H480 V29 H482 V29 H484 V29 H487 V29 H488 V29 H489 V29 H492 V29 H493 V29 H496 V29 H497 V29 H499 V28 H500 V29 H502 V29 H503 V29 H504 V29 H506 V28 H507 V29 H509 V29 H512 V29 H515 V29 H517 V29 H519 V29 H521 V28 H524 V29 H526 V29 H528 V29 H531 V29 H532 V29 H533 V29 H535 V29 H536 V29 H538 V29 H540 V29 H541 V29 H542 V29 H543 V29 H544 V28 H547 V29 H548 V29 H550 V29 H553 V29 H555 V29 H557 V29 H559 V29 H562 V29 H565 V29 H567 V29 H568 V29 H570 V29 H572 V29 H575 V29 H577 V28 H579 V29 H580 V29 H581 V29 H582 V28 H583 V29 H584 V29 H585 V29 H586 V29 H587 V29 H590 V29 H593 V29 H595 V29 H596 V29 H597 V29 H598 V29 H599 V29 H600 V29 H603 V29 H605 V29 H606 V29 H608 V29 H610 V29 H612 V29 H613 V29 H615 V29 H618 V28 H619 V29 H621 V29 H622 V29 H623 V29 H624 V29 H627 V28 H630 V29 H632 V29 H635 V29 H637 V29 H639 V28 H642 V29 H644 V29 H645 V29 H646 V29 H648 V28 H649 V29 H650 V29 H652 V28 H653 V29 H655 V29 H657 V29 H659 V29 H661 V29 H663 V29 H665 V29 H667 V29 H669 V29 H672 V29 H674 V29 H676 V29 H678 V29 H681 V29 H684 V29 H685 V29 H686 V29 H688 V29 H690 V29 H691 V28 H692 V29 H694 V29 H697 V29 H698 V28 H700 V29 H702 V29 H704 V29 H705 V29 H706 V29 H709 V29 H711 V28 H713 V29 H715 V29 H716 V28 H717 V29 H719 V28 H722 V28 H724 V28 H725 V29 H726 V29 H729 V29 H731 V28 H733 V28 H736 V29 H737 V29 H739 V28 H740 V29 H743 V29 H744 V29 H746 V29 H747 V29 H749 V29 H751 V29 H752 V29 H754 V29 H755 V29 H757 V29 H760 V29 H762 V29 H764 V29 H765 V29 H766 V29 H767 V29 H768 V29 H769 V29 H771 V29 H772 V29 H773 V29 H775 V29 H776 V29 H777 V29 H778 V29 H779 V29 H782 V29 H784 V29 H786 V29 H787 V29 H789 V29 H792 V29 H793 V29 H794 V29 H795 V29 H796 V29 H798 V28 H800 V29 H802 V29 H804 V29 H806 V29 H808 V29 H809 V29 H811 V29 H812 V29 H814 V29 H815 V29 H816 V29 H818 V29 H820 V29 H822 V29 H824 V29 H826 V28 H829 V29 H832 V29 H834 V29 H836 V29 H838 V29 H839 V29 H841 V29 H844 V29 H845 V29 H848 V29 H851 V29 H853 V29 H856 V29 H857 V29 H859 V29 H861 V28 H862 V29 H863 V29 H866 V29 H868 V28 H870 V29 H873 V28 H875 V29 H876 V29 H877 V29 H878 V29 H879 V29 H881 V29 H883 V29 H884 V29 H887 V29 H889 V29 H891 V29 H892 V29 H895 V29 H897 V29 H899 V29 H901 V29 H902 V28 H904 V29 H906 V29 H907 V29 H908 V29 H910 V28 H912 V29 H913 V29 H915 V29 H918 V29 H919 V29 H920 V29 H923 V29 H926 V29 H927 V29 H930 V29 H932 V29 H935 V29 H937 V29 H938 V29 H940 V29 H942 V29 H944 V29 H946 V29 H948 V29 H949 V29 H951 V29 H952 V29 H954 V28 H956 V29 H957 V29 H959 V29 H961 V29 H963 V29 H964 V29 H965 V29 H966 V28 H967 V29 H970 V29 H973 V29 H976 V29 H978 V29 H981 V29 H983 V29 H985 V28 H987 V29 H988 V29 H990 V29 H991 V29 H993 V29 H994 V29 H995 V29 H997 V28 H1000 V29 H1002 V28 H1005 V29 H1008 V29 H1011 V29 H1013 V29 H1015 V29 H1017 V29 H1019 V29 H1021 V29 H1024 V29 H1025 V29 H1027 V29 H1029 V29 H1031 V29 H1033 V29 H1035 V29 H1038 V29 H1039 V29 H1042 V28 H1043 V29 H1044 V29 H1046 V29 H1049 V29 H1050 V28 H1052 V29 H1053 V29 H1055 V29 H1057 V29 H1059 V29 H1062 V29 H1063 V29 H1065 V29 H1066 V29 H1067 V29 H1069 V29 H1071 V29 H1072 V29 H1074 V29 H1075 V29 H1077 V28 H1080 V29 H1082 V29 H1085 V29 H1086 V29 H1088 V29 H1089 V29 H1090 V28 H1091 V29 H1093 V29 H1094 V29 H1095 V28 H1097 V29 H1100 V29 H1102 V29 H1103 V29 H1106 V29 H1109 V29 H1112 V29 H1113 V29 H1114 V29 H1117 V29 H1119 V29 H1121 V29 H1123 V29 H1125 V29 H1127 V28 H1128 V29 H1129 V29 H1131 V29 H1134 V29 H1135 V29 H1137 V29 H1138 V29 H1141 V29 H1144 V29 H1146 V29 H1147 V29 H1150 V29 H1152 V29 H1155 V29 H1156 V29 H1158 V29 H1159 V29 H1160 V29 H1162 V29 H1164 V29 H1166 V29 H1167 V29 H1169 V29 H1170 V29 H1172 V29 H1174 V29 H1175 V29 H1177 V29 H1178 V29 H1179 V29 H1182 V29 H1185 V29 H1186 V29 H1188 V28 H1191 V29 H1193 V29 H1194 V29 H1197 V29 H1199 V28 H1202 V29 H1204 V29 H1206 V29 H1207 V29 H1209 V29 H1211 V29 H1213 V29 H1214 V29 H1215 V29 H1216 V29 H1217 V29 H1220 V28 H1222 V29 H1225 V29 H1227 V29 H1229 V29 H1231 V29 H1233 V29 H1234 V29 H1237 V29 H1238 V29 H1240 V28 H1242 V28 H1245 V29 H1247 V29 H1248 V29 H1249 V29 H1250 V29 H1252 V29 H1253 V29 H1255 V29 H1256 V29 H1258 V29 H1261 V29 H1263 V29 H1266 V29 H1268 V29 H1269 V29 H1271 V29 H1273 V29 H1275 V29 H1277 V29 H1278 V29 H1279 V29 H1281 V29 H1283 V29 H1284 V29 H1286 V29 H1287 V29 H1289 V29 H1291 V29 H1292 V29 H1295 V29 H1297 V29 H1300 V29 H1302 V29 H1305 V29 H1307 V29 H1308 V29 H1310 V29 H1313 V29 H1316 V29 H1317 V29 H1319 V29 H1320 V29 H1322 V29 H1323 V29 H1326 V29 H1328 V29 H1330 V29 H1331 V28 H1332 V29 H1334 V29 H1336 V29 H1338 V29 H1340 V29 H1343 V29 H1346 V28 H1348 V29 H1349 V29 H1350 V29 H1352 V29 H1353 V29 H1354 V29 H1355 V29 H1356 V29 H1358 V29 H1359 V29 H1361 V29 H1364 V29 H1365 V29 H1366 V29 H1367 V29 H1369 V29 H1370 V29 H1371 V29 H1372 V29 H1374 V29 H1375 V29" fill="none" stroke="#3c0000" stroke-width="2" shape-rendering="crispEdges"/><path d=" M34.5 29 V23 M37.5 29 V27 M39.5 29 V25 M46.5 29 V26 M49.5 29 V27 M50.5 29 V27 M58.5 29 V23 M60.5 29 V23 M61.5 29 V24 M63.5 29 V24 M66.5 29 V24 M69.5 29 V24 M83.5 29 V26 M86.5 29 V26 M89.5 29 V24 M90.5 29 V27 M97.5 29 V26 M101.5 29 V25 M104.5 29 V26 M106.5 29 V24 M113.5 29 V25 M115.5 29 V25 M118.5 29 V24 M122.5 29 V24 M126.5 29 V24 M128.5 29 V24 M133.5 29 V21 M140.5 29 V26 M145.5 29 V24 M148.5 29 V25 M150.5 29 V26 M153.5 29 V24 M156.5 29 V26 M157.5 29 V25 M163.5 29 V26 M165.5 29 V26 M168.5 29 V26 M170.5 29 V25 M172.5 29 V24 M174.5 29 V24 M176.5 29 V23 M182.5 29 V17 M188.5 29 V25 M191.5 29 V25 M192.5 29 V25 M196.5 29 V25 M204.5 29 V26 M210.5 29 V25 M212.5 29 V25 M219.5 29 V24 M222.5 29 V27 M227.5 29 V24 M228.5 29 V24 M231.5 29 V25 M234.5 29 V27 M239.5 29 V24 M244.5 29 V27 M248.5 29 V23 M250.5 29 V24 M252.5 29 V20 M255.5 29 V26 M257.5 29 V26 M265.5 29 V26 M277.5 29 V24 M281.5 29 V24 M285.5 29 V21 M290.5 29 V25 M296.5 29 V26 M300.5 29 V24 M303.5 29 V25 M306.5 29 V23 M308.5 29 V23 M317.5 29 V25 M334.5 29 V17 M336.5 29 V24 M337.5 29 V26 M345.5 29 V12 M353.5 29 V25 M355.5 29 V27 M357.5 29 V27 M359.5 29 V26 M360.5 29 V25 M362.5 29 V23 M367.5 29 V19 M369.5 29 V23 M370.5 29 V23 M372.5 29 V24 M375.5 29 V25 M384.5 29 V24 M391.5 29 V25 M395.5 29 V23 M396.5 29 V26 M401.5 29 V25 M405.5 29 V26 M410.5 29 V25 M412.5 29 V26 M415.5 29 V24 M420.5 29 V26 M421.5 29 V26 M423.5 29 V25 M426.5 29 V24 M438.5 29 V25 M444.5 29 V20 M445.5 29 V25 M447.5 29 V23 M448.5 29 V25 M451.5 29 V25 M452.5 29 V26 M456.5 29 V25 M459.5 29 V27 M461.5 29 V24 M462.5 29 V27 M467.5 29 V25 M469.5 29 V27 M471.5 29 V25 M472.5 29 V23 M475.5 29 V23 M477.5 29 V17 M479.5 29 V23 M487.5 29 V27 M488.5 29 V24 M492.5 29 V25 M493.5 29 V24 M496.5 29 V27 M497.5 29 V26 M502.5 29 V24 M504.5 29 V27 M507.5 29 V24 M509.5 29 V24 M512.5 29 V26 M515.5 29 V25 M524.5 29 V24 M526.5 29 V27 M532.5 29 V21 M533.5 29 V27 M535.5 29 V24 M538.5 29 V23 M541.5 29 V24 M547.5 29 V24 M553.5 29 V26 M557.5 29 V23 M559.5 29 V26 M568.5 29 V27 M570.5 29 V26 M572.5 29 V27 M580.5 29 V24 M581.5 29 V25 M583.5 29 V27 M586.5 29 V25 M587.5 29 V24 M593.5 29 V25 M595.5 29 V26 M598.5 29 V25 M599.5 29 V24 M603.5 29 V23 M605.5 29 V23 M606.5 29 V23 M608.5 29 V27 M610.5 29 V26 M612.5 29 V23 M615.5 29 V26 M619.5 29 V27 M621.5 29 V23 M622.5 29 V24 M645.5 29 V26 M650.5 29 V25 M653.5 29 V25 M655.5 29 V23 M659.5 29 V26 M667.5 29 V23 M672.5 29 V25 M674.5 29 V19 M681.5 29 V20 M684.5 29 V27 M686.5 29 V23 M692.5 29 V17 M700.5 29 V23 M704.5 29 V24 M709.5 29 V26 M715.5 29 V21 M725.5 29 V26 M729.5 29 V24 M736.5 29 V24 M744.5 29 V26 M746.5 29 V25 M747.5 29 V26 M749.5 29 V17 M751.5 29 V24 M754.5 29 V25 M757.5 29 V24 M760.5 29 V26 M762.5 29 V26 M764.5 29 V25 M769.5 29 V23 M771.5 29 V27 M772.5 29 V26 M773.5 29 V26 M776.5 29 V27 M778.5 29 V26 M779.5 29 V26 M782.5 29 V26 M784.5 29 V27 M786.5 29 V26 M787.5 29 V24 M792.5 29 V25 M795.5 29 V23 M806.5 29 V23 M808.5 29 V25 M809.5 29 V26 M811.5 29 V25 M812.5 29 V27 M815.5 29 V27 M822.5 29 V23 M824.5 29 V25 M829.5 29 V24 M832.5 29 V24 M834.5 29 V25 M836.5 29 V25 M839.5 29 V25 M841.5 29 V24 M851.5 29 V24 M857.5 29 V24 M859.5 29 V26 M863.5 29 V24 M866.5 29 V25 M870.5 29 V26 M875.5 29 V24 M878.5 29 V25 M879.5 29 V15 M884.5 29 V26 M889.5 29 V26 M891.5 29 V25 M897.5 29 V19 M899.5 29 V20 M901.5 29 V24 M906.5 29 V26 M907.5 29 V24 M918.5 29 V24 M920.5 29 V27 M927.5 29 V23 M930.5 29 V24 M935.5 29 V25 M942.5 29 V25 M944.5 29 V24 M949.5 29 V26 M951.5 29 V24 M952.5 29 V27 M957.5 29 V24 M959.5 29 V25 M961.5 29 V27 M964.5 29 V23 M967.5 29 V24 M970.5 29 V24 M976.5 29 V25 M978.5 29 V26 M983.5 29 V20 M988.5 29 V23 M990.5 29 V23 M991.5 29 V24 M995.5 29 V26 M1000.5 29 V23 M1005.5 29 V25 M1008.5 29 V25 M1021.5 29 V24 M1024.5 29 V25 M1033.5 29 V24 M1035.5 29 V24 M1043.5 29 V26 M1044.5 29 V26 M1049.5 29 V25 M1052.5 29 V25 M1053.5 29 V26 M1055.5 29 V26 M1057.5 29 V26 M1063.5 29 V25 M1066.5 29 V26 M1067.5 29 V23 M1072.5 29 V23 M1075.5 29 V23 M1080.5 29 V24 M1082.5 29 V25 M1086.5 29 V26 M1093.5 29 V24 M1094.5 29 V25 M1097.5 29 V24 M1102.5 29 V26 M1103.5 29 V26 M1106.5 29 V23 M1112.5 29 V26 M1113.5 29 V24 M1114.5 29 V19 M1119.5 29 V25 M1121.5 29 V15 M1128.5 29 V25 M1129.5 29 V26 M1131.5 29 V26 M1135.5 29 V27 M1137.5 29 V19 M1138.5 29 V25 M1141.5 29 V25 M1156.5 29 V26 M1159.5 29 V25 M1160.5 29 V26 M1164.5 29 V21 M1170.5 29 V25 M1174.5 29 V25 M1175.5 29 V26 M1178.5 29 V25 M1179.5 29 V24 M1185.5 29 V26 M1191.5 29 V21 M1194.5 29 V24 M1204.5 29 V25 M1207.5 29 V25 M1216.5 29 V24 M1227.5 29 V27 M1231.5 29 V24 M1234.5 29 V25 M1237.5 29 V17 M1245.5 29 V25 M1247.5 29 V26 M1248.5 29 V26 M1249.5 29 V26 M1250.5 29 V25 M1256.5 29 V24 M1258.5 29 V23 M1271.5 29 V25 M1273.5 29 V25 M1275.5 29 V26 M1281.5 29 V12 M1289.5 29 V26 M1297.5 29 V27 M1305.5 29 V25 M1307.5 29 V26 M1308.5 29 V24 M1313.5 29 V26 M1317.5 29 V24 M1320.5 29 V26 M1323.5 29 V24 M1326.5 29 V23 M1336.5 29 V25 M1338.5 29 V24 M1343.5 29 V23 M1348.5 29 V25 M1349.5 29 V26 M1350.5 29 V25 M1352.5 29 V27 M1356.5 29 V23 M1369.5 29 V24 M1372.5 29 V25 M1375.5 29 V24 M97.5 29 V17 M133.5 29 V13 M245.5 29 V17 M527.5 29 V13 M550.5 29 V15 M606.5 29 V13 M706.5 29 V17 M770.5 29 V13 M789.5 29 V13 M799.5 29 V13 M805.5 29 V13 M821.5 29 V17 M918.5 29 V15 M956.5 29 V13 M1037.5 29 V17 M1125.5 29 V16 M1135.5 29 V17 M1249.5 29 V13 M1275.5 29 V16 M1365.5 29 V17" fill="none" stroke="#4a0000" stroke-width="1" shape-rendering="crispEdges"/><rect x="52" y="48" width="1" height="3" fill="#555"/><rect x="108" y="48" width="1" height="3" fill="#555"/><rect x="164" y="48" width="1" height="3" fill="#555"/><rect x="220" y="48" width="1" height="3" fill="#555"/><rect x="276" y="48" width="1" height="3" fill="#555"/><rect x="332" y="48" width="1" height="3" fill="#555"/><rect x="388" y="48" width="1" height="3" fill="#555"/><rect x="444" y="48" width="1" height="3" fill="#555"/><rect x="500" y="48" width="1" height="3" fill="#555"/><rect x="556" y="48" width="1" height="3" fill="#555"/><rect x="612" y="48" width="1" height="3" fill="#555"/><rect x="668" y="48" width="1" height="3" fill="#555"/><rect x="724" y="48" width="1" height="3" fill="#555"/><rect x="780" y="48" width="1" height="3" fill="#555"/><rect x="836" y="48" width="1" height="3" fill="#555"/><rect x="892" y="48" width="1" height="3" fill="#555"/><rect x="948" y="48" width="1" height="3" fill="#555"/><rect x="1004" y="48" width="1" height="3" fill="#555"/><rect x="1060" y="48" width="1" height="3" fill="#555"/><rect x="1116" y="48" width="1" height="3" fill="#555"/><rect x="1172" y="48" width="1" height="3" fill="#555"/><rect x="1228" y="48" width="1" height="3" fill="#555"/><rect x="1284" y="48" width="1" height="3" fill="#555"/><rect x="1340" y="48" width="1" height="3" fill="#555"/></svg>
<div class="t" style="top:595px;left:39.6px;font-size:10.4px;line-height:11.62px;color:#2f552f;">18:45</div>
<div class="t" style="top:595px;left:95.6px;font-size:10.4px;line-height:11.62px;color:#2f552f;">19:00</div>
<div class="t" style="top:595px;left:151.6px;font-size:10.4px;line-height:11.62px;color:#2f552f;">19:15</div>
<div class="t" style="top:595px;left:207.6px;font-size:10.4px;line-height:11.62px;color:#2f552f;">19:30</div>
<div class="t" style="top:595px;left:263.6px;font-size:10.4px;line-height:11.62px;color:#2f552f;">19:45</div>
<div class="t" style="top:595px;left:319.5px;font-size:10.4px;line-height:11.62px;color:#2f552f;">20:00</div>
<div class="t" style="top:595px;left:375.5px;font-size:10.4px;line-height:11.62px;color:#2f552f;">20:15</div>
<div class="t" style="top:595px;left:431.5px;font-size:10.4px;line-height:11.62px;color:#2f552f;">20:30</div>
<div class="t" style="top:595px;left:487.5px;font-size:10.4px;line-height:11.62px;color:#2f552f;">20:45</div>
<div class="t" style="top:595px;left:543.5px;font-size:10.4px;line-height:11.62px;color:#2f552f;">21:00</div>
<div class="t" style="top:595px;left:599.5px;font-size:10.4px;line-height:11.62px;color:#2f552f;">21:15</div>
<div class="t" style="top:595px;left:655.5px;font-size:10.4px;line-height:11.62px;color:#2f552f;">21:30</div>
<div class="t" style="top:595px;left:711.5px;font-size:10.4px;line-height:11.62px;color:#2f552f;">21:45</div>
<div class="t" style="top:595px;left:767.5px;font-size:10.4px;line-height:11.62px;color:#2f552f;">22:00</div>
<div class="t" style="top:595px;left:823.5px;font-size:10.4px;line-height:11.62px;color:#2f552f;">22:15</div>
<div class="t" style="top:595px;left:879.4px;font-size:10.4px;line-height:11.62px;color:#2f552f;">22:30</div>
<div class="t" style="top:595px;left:935.4px;font-size:10.4px;line-height:11.62px;color:#2f552f;">22:45</div>
<div class="t" style="top:595px;left:991.4px;font-size:10.4px;line-height:11.62px;color:#2f552f;">23:00</div>
<div class="t" style="top:595px;left:1047.4px;font-size:10.4px;line-height:11.62px;color:#2f552f;">23:15</div>
<div class="t" style="top:595px;left:1103.4px;font-size:10.4px;line-height:11.62px;color:#2f552f;">23:30</div>
<div class="t" style="top:595px;left:1159.4px;font-size:10.4px;line-height:11.62px;color:#2f552f;">23:45</div>
<div class="t" style="top:595px;left:1221.2px;font-size:10.4px;line-height:11.62px;color:#2f552f;">0:00</div>
<div class="t" style="top:595px;left:1277.2px;font-size:10.4px;line-height:11.62px;color:#2f552f;">0:15</div>
<div class="t" style="top:595px;left:1333.2px;font-size:10.4px;line-height:11.62px;color:#2f552f;">0:30</div>
<div class="t" style="top:614px;left:31px;font-size:10.95px;line-height:12.23px;color:#1a1a1a;">bredband2-ic-385967.ip.twelve99-cust.net (62.115.37.131) hop 11</div>
<div class="t" style="top:615px;left:1200px;width:150px;text-align:right;font-size:10.6px;line-height:11.84px;color:#1a1a1a;">6 hours (18:39 - 0:39)</div>
<svg class="r" style="left:1353px;top:614px" width="13" height="13"><circle cx="6.2" cy="6.2" r="5.6" fill="#dcdcdc"/><path d="M3.6 5 L6.2 7.5 L8.8 5" fill="none" stroke="#9a9a9a" stroke-width="1.1"/></svg>
<div class="t" style="top:625px;left:-1.1999999999999993px;width:30px;text-align:right;font-size:10.6px;line-height:11.84px;color:#1a1a1a;">90</div>
<div class="t" style="top:652px;left:-1.1999999999999993px;width:30px;text-align:right;font-size:10.6px;line-height:11.84px;color:#1a1a1a;">0</div>
<div class="t" style="left:19.5px;top:651.5px;font-size:10px;line-height:10px;color:#1a1a1a;transform-origin:0 0;transform:rotate(-90deg);">ms</div>
<div class="t" style="top:627px;left:1377px;font-size:10.5px;line-height:11.73px;color:#9a3636;">1</div>
<svg class="r" style="left:0px;top:615px" width="1395" height="62"><rect x="31" y="12" width="1344" height="36" fill="#ddeed5"/><rect x="524.5" y="12" width="1" height="36" fill="#c4c4c4"/><rect x="527.2" y="12" width="1" height="36" fill="#c4c4c4"/><rect x="530.1" y="12" width="1" height="36" fill="#c4c4c4"/><rect x="548.3" y="12" width="1" height="36" fill="#c4c4c4"/><rect x="602.5" y="12" width="1" height="36" fill="#c4c4c4"/><rect x="605.5" y="12" width="1" height="36" fill="#c4c4c4"/><rect x="1361.2" y="12" width="1" height="36" fill="#c4c4c4"/><rect x="923" y="12" width="3" height="36" fill="#f2b4a4" opacity="0.75"/><rect x="924" y="12" width="1" height="36" fill="#8e2b22"/><rect x="1175" y="12" width="3" height="36" fill="#f2b4a4" opacity="0.75"/><rect x="1176" y="12" width="1" height="36" fill="#8e2b22"/><rect x="1266" y="12" width="3" height="36" fill="#f2b4a4" opacity="0.75"/><rect x="1267" y="12" width="1" height="36" fill="#8e2b22"/><rect x="1305" y="12" width="3" height="36" fill="#f2b4a4" opacity="0.75"/><rect x="1306" y="12" width="1" height="36" fill="#8e2b22"/><rect x="1365" y="12" width="5" height="36" fill="#f2b4a4" opacity="0.75"/><rect x="1366.5" y="12" width="2.5" height="36" fill="#95201a"/><path d="M84 13 H86 V14 H87 M94 13 V15 H100 V13 M522.5 13 V30 H525.5 V13 V30 H528.5 V13 H532.5 V16.5 H536 L538 23 H540 L541.5 19 V13 V19 L544.5 24 V30 H548.5 V13 H553 V14.5 H556 V13 H560 M566 13 V14 H570 V13 H582.5 M586 13 V14 H587.5 V13 H590 V16 H594.5 V13 H601 L602.5 20 H604.5 V13 H605 V15 H608 V13 H611.5 V22 L615 29 H617.5 V13 H618.5 M622 13 V16 H624.5 V13 H629 M776 13 V14 H779 M839 13 H842 H845 H849 V18 H851 V13 H855 H856 H858 V14 H861 V13 H864 H868 H872 V18 H873 V13 H874 V15 H876 V13 M893 13 H894 H896 H898 H900 M911 13 H912 H914 H918 H919 H921 H925 V14 H928 V13 H929 H931 H932 M938 13 H939 V14 H941 V13 H944 H947 H948 M953 13 H955 V15 H957 V13 H958 H959 V14 H960 V13 H961 H964 V18 H965 V13 H968 H970 H972 V16 H972 V13 M980 13 H981 V18 H983 V13 H984 V16 H987 V13 H990 V15 H990 V13 M996 13 H999 V18 H1000 V13 M1008 13 H1010 H1011 V18 H1014 V13 H1016 V15 H1018 V13 H1020 M1024 13 H1028 H1032 V16 H1033 V13 M1039 13 H1041 V15 H1044 V13 H1046 H1048 H1052 V16 H1054 V13 H1055 V14 H1055 V13" fill="none" stroke="#0a0a0a" stroke-width="1.6"/><path d="M1051 13 V15 H1053 V13 M1058 13 V18 H1059 V15 H1061 V23 H1063 V25 H1065 V23 H1067 V13 H1069 V14 H1070 V16 H1073 V13 H1075 V14 H1076 V25 H1078 V21 H1079 V23 H1081 V20 H1082 V20 H1085 V15 H1087 V13 H1088 V24 H1089 V21 H1091 V25 H1092 V23 H1093 V20 H1096 V23 H1097 V13 H1099 V22 H1102 V23 H1105 V23 H1106 V23 H1109 V13 H1112 V23 H1114 V22 H1116 V14 H1118 V22 H1121 V24 H1123 V24 H1125 V21 H1127 V24 H1129 V16 H1131 V20 H1132 V22 H1134 V16 H1136 V23 H1139 V23 H1141 V23 H1140 V20 L1143 30" fill="none" stroke="#0a0a0a" stroke-width="1.4"/><path d="M1143 30  H1147 V29 H1151 V30 H1153 V30 H1157 V30 H1161 V30 H1169 V29 H1175 V30 H1177 V30 H1181 V29 H1183 V30 H1185 V30 H1193 V30 H1197 V30 H1200 V31 H1204 V29 H1210 V30 H1212 V31 H1216 V30 H1224 V30 H1227 V30 H1230 V31 H1233 V30 H1236 V30 H1238 V30 H1246 V30 H1254 V30 H1258 V30 H1261 V29 H1264 V31 H1266 V30 H1274 V30 H1278 V30 H1280 V30 H1282 V31 H1290 V30 H1294 V30 H1296 V29 H1302 V30 H1305 V30 H1308 V30 H1316 V30 H1324 V30 H1330 V30 H1336 V30 H1338 V30 H1344 V30 H1348 V30 H1356 V30 H1364 V30 H1372 V30 H1375 V30 M1225.5 30 V23" fill="none" stroke="#0a0a0a" stroke-width="2"/><rect x="31" y="12" width="1" height="37" fill="#555"/><rect x="31" y="48" width="1344" height="1" fill="#555"/><rect x="52" y="48" width="1" height="3" fill="#555"/><rect x="108" y="48" width="1" height="3" fill="#555"/><rect x="164" y="48" width="1" height="3" fill="#555"/><rect x="220" y="48" width="1" height="3" fill="#555"/><rect x="276" y="48" width="1" height="3" fill="#555"/><rect x="332" y="48" width="1" height="3" fill="#555"/><rect x="388" y="48" width="1" height="3" fill="#555"/><rect x="444" y="48" width="1" height="3" fill="#555"/><rect x="500" y="48" width="1" height="3" fill="#555"/><rect x="556" y="48" width="1" height="3" fill="#555"/><rect x="612" y="48" width="1" height="3" fill="#555"/><rect x="668" y="48" width="1" height="3" fill="#555"/><rect x="724" y="48" width="1" height="3" fill="#555"/><rect x="780" y="48" width="1" height="3" fill="#555"/><rect x="836" y="48" width="1" height="3" fill="#555"/><rect x="892" y="48" width="1" height="3" fill="#555"/><rect x="948" y="48" width="1" height="3" fill="#555"/><rect x="1004" y="48" width="1" height="3" fill="#555"/><rect x="1060" y="48" width="1" height="3" fill="#555"/><rect x="1116" y="48" width="1" height="3" fill="#555"/><rect x="1172" y="48" width="1" height="3" fill="#555"/><rect x="1228" y="48" width="1" height="3" fill="#555"/><rect x="1284" y="48" width="1" height="3" fill="#555"/><rect x="1340" y="48" width="1" height="3" fill="#555"/></svg>
<div class="t" style="top:665px;left:39.6px;font-size:10.4px;line-height:11.62px;color:#2f552f;">18:45</div>
<div class="t" style="top:665px;left:95.6px;font-size:10.4px;line-height:11.62px;color:#2f552f;">19:00</div>
<div class="t" style="top:665px;left:151.6px;font-size:10.4px;line-height:11.62px;color:#2f552f;">19:15</div>
<div class="t" style="top:665px;left:207.6px;font-size:10.4px;line-height:11.62px;color:#2f552f;">19:30</div>
<div class="t" style="top:665px;left:263.6px;font-size:10.4px;line-height:11.62px;color:#2f552f;">19:45</div>
<div class="t" style="top:665px;left:319.5px;font-size:10.4px;line-height:11.62px;color:#2f552f;">20:00</div>
<div class="t" style="top:665px;left:375.5px;font-size:10.4px;line-height:11.62px;color:#2f552f;">20:15</div>
<div class="t" style="top:665px;left:431.5px;font-size:10.4px;line-height:11.62px;color:#2f552f;">20:30</div>
<div class="t" style="top:665px;left:487.5px;font-size:10.4px;line-height:11.62px;color:#2f552f;">20:45</div>
<div class="t" style="top:665px;left:543.5px;font-size:10.4px;line-height:11.62px;color:#2f552f;">21:00</div>
<div class="t" style="top:665px;left:599.5px;font-size:10.4px;line-height:11.62px;color:#2f552f;">21:15</div>
<div class="t" style="top:665px;left:655.5px;font-size:10.4px;line-height:11.62px;color:#2f552f;">21:30</div>
<div class="t" style="top:665px;left:711.5px;font-size:10.4px;line-height:11.62px;color:#2f552f;">21:45</div>
<div class="t" style="top:665px;left:767.5px;font-size:10.4px;line-height:11.62px;color:#2f552f;">22:00</div>
<div class="t" style="top:665px;left:823.5px;font-size:10.4px;line-height:11.62px;color:#2f552f;">22:15</div>
<div class="t" style="top:665px;left:879.4px;font-size:10.4px;line-height:11.62px;color:#2f552f;">22:30</div>
<div class="t" style="top:665px;left:935.4px;font-size:10.4px;line-height:11.62px;color:#2f552f;">22:45</div>
<div class="t" style="top:665px;left:991.4px;font-size:10.4px;line-height:11.62px;color:#2f552f;">23:00</div>
<div class="t" style="top:665px;left:1047.4px;font-size:10.4px;line-height:11.62px;color:#2f552f;">23:15</div>
<div class="t" style="top:665px;left:1103.4px;font-size:10.4px;line-height:11.62px;color:#2f552f;">23:30</div>
<div class="t" style="top:665px;left:1159.4px;font-size:10.4px;line-height:11.62px;color:#2f552f;">23:45</div>
<div class="t" style="top:665px;left:1221.2px;font-size:10.4px;line-height:11.62px;color:#2f552f;">0:00</div>
<div class="t" style="top:665px;left:1277.2px;font-size:10.4px;line-height:11.62px;color:#2f552f;">0:15</div>
<div class="t" style="top:665px;left:1333.2px;font-size:10.4px;line-height:11.62px;color:#2f552f;">0:30</div>
<div class="t" style="top:684px;left:31px;font-size:10.95px;line-height:12.23px;color:#1a1a1a;">89-160-50-234.cust.bredband2.com (89.160.50.234) hop 12</div>
<div class="t" style="top:685px;left:1200px;width:150px;text-align:right;font-size:10.6px;line-height:11.84px;color:#1a1a1a;">6 hours (18:39 - 0:39)</div>
<svg class="r" style="left:1353px;top:684px" width="13" height="13"><circle cx="6.2" cy="6.2" r="5.6" fill="#dcdcdc"/><path d="M3.6 5 L6.2 7.5 L8.8 5" fill="none" stroke="#9a9a9a" stroke-width="1.1"/></svg>
<div class="t" style="top:695px;left:-1.1999999999999993px;width:30px;text-align:right;font-size:10.6px;line-height:11.84px;color:#1a1a1a;">90</div>
<div class="t" style="top:722px;left:-1.1999999999999993px;width:30px;text-align:right;font-size:10.6px;line-height:11.84px;color:#1a1a1a;">0</div>
<div class="t" style="left:19.5px;top:721.5px;font-size:10px;line-height:10px;color:#1a1a1a;transform-origin:0 0;transform:rotate(-90deg);">ms</div>
<div class="t" style="top:697px;left:1377px;font-size:10.5px;line-height:11.73px;color:#9a3636;">1</div>
<svg class="r" style="left:0px;top:685px" width="1395" height="62"><rect x="31" y="12" width="1344" height="36" fill="#fe0000"/><rect x="31" y="12" width="1344" height="1" fill="#c00000"/><rect x="526.5" y="12" width="1.5" height="36" fill="#fff"/><path d="M32 29 H35 V30 H37 V29 H40 H41 V29 H42 V28 H44 V29 H46 V29 H49 V30 H50 V29 H51 V29 H53 V28 H54 V28 H57 V29 H58 H59 V29 H60 V29 H62 V30 H63 V29 H64 V28 H65 V29 H67 V30 H69 V29 H70 V30 H72 V30 H75 V29 H78 V29 H80 V28 H82 V29 H84 V29 H85 V29 H86 V28 H87 V29 H89 V29 H90 V29 H92 V30 H95 V29 H97 V28 H98 V29 H99 V28 H100 V29 H102 V30 H104 V29 H106 V29 H107 V29 H109 V29 H110 V29 H111 V28 H114 V29 H115 V30 H118 V28 H120 V30 H121 V29 H123 V29 H124 V29 H125 V29 H128 V29 H129 V30 H132 V30 H134 V29 H136 V28 H137 V29 H139 V29 H140 V29 H143 V29 H145 V28 H147 V30 H148 V29 H150 V28 H153 V29 H156 V29 H158 V29 H160 V29 H162 V29 H163 V28 H166 V29 H168 V29 H169 V28 H171 V29 H174 V29 H176 V28 H178 V29 H179 V29 H181 V29 H183 V29 H185 V29 H187 V29 H189 V29 H192 V29 H194 V29 H196 V30 H198 V29 H201 V29 H203 V30 H205 V29 H207 V30 H208 V29 H210 V29 H212 V29 H215 V29 H216 V29 H218 V30 H219 V29 H221 V28 H224 V29 H226 V30 H229 V29 H231 V29 H232 V28 H235 V29 H236 V28 H237 V29 H238 V29 H239 V28 H240 V28 H241 V29 H244 V28 H246 V30 H249 V28 H250 V30 H252 H254 V29 H255 V29 H258 V30 H259 V29 H261 V28 H264 V29 H267 V30 H269 V29 H271 V29 H274 V29 H276 V29 H277 V29 H280 V29 H281 V29 H284 V28 H285 V30 H287 V29 H290 V29 H292 V29 H295 V30 H297 V29 H299 V30 H301 V30 H302 V29 H304 V29 H306 V29 H308 H310 V29 H311 V29 H312 V29 H314 V30 H315 V29 H317 H318 V29 H319 V30 H321 V29 H323 V30 H326 V29 H329 V29 H332 V29 H333 H335 V30 H337 V29 H340 H342 V29 H345 V28 H346 V30 H348 V29 H349 V29 H352 V28 H354 V29 H356 V29 H358 V29 H360 V29 H361 V29 H363 V29 H364 V30 H365 V29 H367 V29 H369 V29 H370 V28 H373 V29 H375 V29 H377 V29 H378 V28 H379 V30 H380 V29 H381 V30 H383 V29 H385 V29 H386 V28 H387 V28 H388 V29 H389 V29 H391 V28 H394 V28 H395 V28 H396 V28 H397 V29 H398 V30 H401 V29 H403 V29 H404 H406 V29 H408 V29 H410 V29 H411 V29 H412 V29 H415 V30 H418 V29 H419 V30 H422 V30 H424 V29 H425 V29 H427 V29 H429 V28 H430 V29 H431 V29 H432 V28 H433 V29 H435 V30 H437 V29 H439 V28 H442 H443 V29 H445 V29 H446 V29 H447 V29 H449 V29 H450 V29 H452 V30 H453 V30 H456 V29 H458 V30 H460 V29 H462 V29 H464 V29 H467 V29 H468 V29 H470 V28 H471 V28 H472 V28 H474 V29 H476 V29 H478 H480 V29 H483 V29 H485 V29 H486 V28 H487 V28 H489 V29 H491 V28 H493 V28 H494 V29 H495 V28 H496 V30 H498 V30 H499 V29 H501 V29 H502 V28 H504 V30 H505 V29 H506 V28 H507 V29 H508 V29 H510 V29 H511 V29 H513 V28 H515 V28 H516 V28 H517 V29 H520 V29 H522 H524 V29 H526 V28 H527 V29 H530 V29 H531 V29 H532 V29 H534 V28 H536 V28 H537 V29 H539 V30 H540 V28 H542 V29 H543 V29 H544 V28 H547 V29 H548 V29 H549 V29 H550 V28 H551 V29 H552 V29 H554 V29 H556 V29 H558 V29 H559 V29 H561 V29 H562 V29 H563 V30 H564 V29 H566 V29 H568 V28 H571 V28 H572 V29 H574 V29 H575 V30 H577 V29 H578 V29 H580 V29 H581 V28 H583 V30 H586 H587 V29 H589 V28 H590 V29 H592 V30 H594 V29 H596 V28 H597 V28 H599 V29 H601 V28 H604 V29 H607 H608 V29 H610 V29 H612 V29 H615 H616 V30 H618 V30 H619 V29 H620 V29 H621 V30 H624 V28 H625 V29 H627 V29 H628 V30 H630 V29 H632 V29 H633 V29 H634 V29 H636 V29 H637 V28 H639 V29 H640 V29 H641 V29 H642 V29 H644 V30 H645 V28 H646 V30 H649 V30 H650 V30 H651 V29 H652 V29 H654 V30 H655 V29 H657 V30 H658 V28 H659 V29 H661 V29 H662 V29 H664 V29 H666 V29 H669 V28 H670 V30 H671 V28 H674 V29 H675 V29 H676 V30 H677 V29 H680 V30 H682 V29 H684 V29 H687 V29 H690 V29 H693 V28 H695 V30 H698 H700 V30 H701 V28 H703 V29 H705 V30 H706 V30 H707 V28 H708 V29 H710 V29 H713 V29 H714 V29 H715 V29 H716 V30 H719 V29 H720 V29 H722 V28 H725 V29 H728 V30 H730 V28 H733 V29 H735 V30 H736 V28 H738 V29 H741 V28 H742 V28 H744 V29 H745 V29 H748 V29 H751 V29 H753 V30 H755 V29 H756 V30 H758 V28 H760 V28 H761 V28 H763 V29 H766 V29 H768 V28 H771 V28 H773 V29 H774 V29 H775 V29 H776 V30 H778 V29 H779 V29 H782 V29 H784 V29 H785 V28 H786 V28 H788 V28 H791 V29 H794 V29 H796 V29 H797 V29 H800 V29 H801 V30 H802 V28 H804 V30 H806 V29 H807 V30 H810 V29 H811 V28 H814 V29 H815 V29 H817 V30 H819 V29 H820 V29 H822 H824 V29 H825 V29 H827 V28 H829 V29 H830 V29 H832 V29 H833 V29 H834 V30 H835 V30 H836 V28 H837 V29 H839 V29 H842 V29 H843 V28 H845 V28 H846 H848 V29 H849 V30 H851 V29 H854 V28 H855 V28 H857 H859 V29 H861 V29 H862 V28 H865 V29 H868 V29 H871 V29 H872 V28 H874 V29 H876 V29 H878 V29 H880 H882 V28 H883 V29 H884 V29 H885 V30 H886 V30 H888 V30 H889 V29 H890 V29 H892 V28 H894 V28 H896 V29 H897 V29 H899 V29 H902 V29 H904 V30 H906 V29 H907 H908 V30 H910 V30 H911 V28 H914 V29 H917 V28 H918 V28 H920 V30 H922 V29 H925 V29 H926 V29 H927 V30 H930 H931 V30 H932 H934 V30 H937 V30 H939 V28 H942 V30 H944 V29 H945 V29 H947 V29 H948 V29 H950 V29 H952 V29 H955 V29 H957 V30 H958 V29 H959 V29 H960 V29 H963 V29 H964 V29 H966 V29 H968 V29 H969 V29 H970 V29 H973 V29 H976 V29 H977 V29 H978 V30 H979 V30 H981 V30 H983 V29 H984 V29 H986 V30 H987 V29 H989 V28 H990 V29 H993 V29 H995 V29 H996 V29 H999 V28 H1001 V29 H1002 V29 H1005 V29 H1006 H1007 V29 H1010 V29 H1013 V29 H1016 V29 H1017 V29 H1020 V28 H1021 V29 H1023 V29 H1026 V29 H1027 V29 H1029 V28 H1031 V30 H1033 V30 H1035 V29 H1037 V29 H1038 V29 H1040 V30 H1043 V28 H1044 V28 H1045 V29 H1047 V29 H1049 V28 H1050 V29 H1051 V29 H1053 V29 H1055 V29 H1056 V29 H1059 V29 H1062 V29 H1063 V29 H1064 V29 H1066 V29 H1068 V29 H1069 V30 H1071 V29 H1074 V30 H1075 V29 H1076 V29 H1077 V30 H1078 V29 H1080 V29 H1083 V28 H1086 V30 H1088 V29 H1090 V28 H1092 V29 H1094 V28 H1096 V29 H1098 V28 H1100 V28 H1101 V29 H1104 V29 H1106 V29 H1107 V29 H1110 V29 H1111 V29 H1113 V29 H1114 V29 H1115 V28 H1116 V28 H1119 V28 H1122 V30 H1123 V30 H1126 V29 H1128 V28 H1131 V29 H1132 V30 H1133 V29 H1135 V29 H1138 V28 H1140 V28 H1142 V30 H1145 V29 H1148 V29 H1150 V30 H1152 V29 H1154 V29 H1157 V28 H1160 V28 H1161 V29 H1162 V28 H1163 V29 H1165 V30 H1167 V29 H1168 V29 H1170 V28 H1173 V29 H1175 V29 H1178 V29 H1179 V28 H1180 V30 H1183 V29 H1185 V29 H1188 V29 H1190 V29 H1191 V29 H1192 V29 H1194 V29 H1195 V30 H1196 V29 H1197 H1199 V29 H1201 V29 H1203 V29 H1206 V29 H1208 V29 H1211 V29 H1214 V29 H1215 V28 H1217 V29 H1220 V29 H1222 V29 H1223 V30 H1224 V29 H1225 V29 H1226 V29 H1229 V30 H1231 V29 H1233 V29 H1234 V29 H1235 V28 H1236 V29 H1239 V30 H1242 V30 H1243 V30 H1246 V29 H1248 V29 H1249 V29 H1252 V29 H1253 V29 H1255 H1256 V28 H1258 V29 H1260 V29 H1263 V28 H1266 V29 H1269 V29 H1272 V28 H1274 V29 H1275 V29 H1277 V28 H1280 V30 H1281 V28 H1283 H1284 V30 H1286 V30 H1287 V29 H1288 V28 H1290 V29 H1291 V29 H1292 V30 H1295 V29 H1297 V29 H1298 V29 H1300 V29 H1303 V29 H1305 V29 H1306 V30 H1308 V29 H1309 V28 H1312 V29 H1313 V30 H1314 V29 H1316 V30 H1317 V29 H1318 H1320 V29 H1321 V29 H1323 V29 H1325 V29 H1326 V29 H1328 H1331 V30 H1333 V30 H1336 V29 H1338 V29 H1341 V29 H1343 V29 H1345 V29 H1346 V30 H1348 V28 H1351 V28 H1354 V29 H1355 V29 H1358 V30 H1359 V29 H1361 V28 H1363 V29 H1364 V30 H1365 V29 H1366 V29 H1367 V28 H1370 V29 H1371 V29 H1372 V29 H1375 V29" fill="none" stroke="#3c0000" stroke-width="2" shape-rendering="crispEdges"/><path d=" M40.5 29 V22 M58.5 29 V26 M252.5 29 V22 M308.5 29 V24 M317.5 29 V24 M333.5 29 V25 M340.5 29 V24 M404.5 29 V26 M442.5 29 V22 M478.5 29 V22 M522.5 29 V26 M586.5 29 V24 M607.5 29 V26 M615.5 29 V22 M698.5 29 V25 M822.5 29 V22 M846.5 29 V25 M857.5 29 V26 M880.5 29 V25 M907.5 29 V22 M930.5 29 V22 M932.5 29 V25 M1006.5 29 V22 M1197.5 29 V25 M1255.5 29 V25 M1283.5 29 V22 M1318.5 29 V25 M1328.5 29 V26 M421.5 29 V19 M770.5 29 V13 M806.5 29 V15 M1131.5 29 V19" fill="none" stroke="#4a0000" stroke-width="1" shape-rendering="crispEdges"/><rect x="52" y="48" width="1" height="3" fill="#555"/><rect x="108" y="48" width="1" height="3" fill="#555"/><rect x="164" y="48" width="1" height="3" fill="#555"/><rect x="220" y="48" width="1" height="3" fill="#555"/><rect x="276" y="48" width="1" height="3" fill="#555"/><rect x="332" y="48" width="1" height="3" fill="#555"/><rect x="388" y="48" width="1" height="3" fill="#555"/><rect x="444" y="48" width="1" height="3" fill="#555"/><rect x="500" y="48" width="1" height="3" fill="#555"/><rect x="556" y="48" width="1" height="3" fill="#555"/><rect x="612" y="48" width="1" height="3" fill="#555"/><rect x="668" y="48" width="1" height="3" fill="#555"/><rect x="724" y="48" width="1" height="3" fill="#555"/><rect x="780" y="48" width="1" height="3" fill="#555"/><rect x="836" y="48" width="1" height="3" fill="#555"/><rect x="892" y="48" width="1" height="3" fill="#555"/><rect x="948" y="48" width="1" height="3" fill="#555"/><rect x="1004" y="48" width="1" height="3" fill="#555"/><rect x="1060" y="48" width="1" height="3" fill="#555"/><rect x="1116" y="48" width="1" height="3" fill="#555"/><rect x="1172" y="48" width="1" height="3" fill="#555"/><rect x="1228" y="48" width="1" height="3" fill="#555"/><rect x="1284" y="48" width="1" height="3" fill="#555"/><rect x="1340" y="48" width="1" height="3" fill="#555"/></svg>
<div class="t" style="top:735px;left:39.6px;font-size:10.4px;line-height:11.62px;color:#2f552f;">18:45</div>
<div class="t" style="top:735px;left:95.6px;font-size:10.4px;line-height:11.62px;color:#2f552f;">19:00</div>
<div class="t" style="top:735px;left:151.6px;font-size:10.4px;line-height:11.62px;color:#2f552f;">19:15</div>
<div class="t" style="top:735px;left:207.6px;font-size:10.4px;line-height:11.62px;color:#2f552f;">19:30</div>
<div class="t" style="top:735px;left:263.6px;font-size:10.4px;line-height:11.62px;color:#2f552f;">19:45</div>
<div class="t" style="top:735px;left:319.5px;font-size:10.4px;line-height:11.62px;color:#2f552f;">20:00</div>
<div class="t" style="top:735px;left:375.5px;font-size:10.4px;line-height:11.62px;color:#2f552f;">20:15</div>
<div class="t" style="top:735px;left:431.5px;font-size:10.4px;line-height:11.62px;color:#2f552f;">20:30</div>
<div class="t" style="top:735px;left:487.5px;font-size:10.4px;line-height:11.62px;color:#2f552f;">20:45</div>
<div class="t" style="top:735px;left:543.5px;font-size:10.4px;line-height:11.62px;color:#2f552f;">21:00</div>
<div class="t" style="top:735px;left:599.5px;font-size:10.4px;line-height:11.62px;color:#2f552f;">21:15</div>
<div class="t" style="top:735px;left:655.5px;font-size:10.4px;line-height:11.62px;color:#2f552f;">21:30</div>
<div class="t" style="top:735px;left:711.5px;font-size:10.4px;line-height:11.62px;color:#2f552f;">21:45</div>
<div class="t" style="top:735px;left:767.5px;font-size:10.4px;line-height:11.62px;color:#2f552f;">22:00</div>
<div class="t" style="top:735px;left:823.5px;font-size:10.4px;line-height:11.62px;color:#2f552f;">22:15</div>
<div class="t" style="top:735px;left:879.4px;font-size:10.4px;line-height:11.62px;color:#2f552f;">22:30</div>
<div class="t" style="top:735px;left:935.4px;font-size:10.4px;line-height:11.62px;color:#2f552f;">22:45</div>
<div class="t" style="top:735px;left:991.4px;font-size:10.4px;line-height:11.62px;color:#2f552f;">23:00</div>
<div class="t" style="top:735px;left:1047.4px;font-size:10.4px;line-height:11.62px;color:#2f552f;">23:15</div>
<div class="t" style="top:735px;left:1103.4px;font-size:10.4px;line-height:11.62px;color:#2f552f;">23:30</div>
<div class="t" style="top:735px;left:1159.4px;font-size:10.4px;line-height:11.62px;color:#2f552f;">23:45</div>
<div class="t" style="top:735px;left:1221.2px;font-size:10.4px;line-height:11.62px;color:#2f552f;">0:00</div>
<div class="t" style="top:735px;left:1277.2px;font-size:10.4px;line-height:11.62px;color:#2f552f;">0:15</div>
<div class="t" style="top:735px;left:1333.2px;font-size:10.4px;line-height:11.62px;color:#2f552f;">0:30</div>
<div class="t" style="top:754px;left:31px;font-size:10.95px;line-height:12.23px;color:#1a1a1a;">lo0-vxo-owe7-cr2.se.bredband2.net (31.209.0.53) hop 13</div>
<div class="t" style="top:755px;left:1200px;width:150px;text-align:right;font-size:10.6px;line-height:11.84px;color:#1a1a1a;">6 hours (18:39 - 0:39)</div>
<svg class="r" style="left:1353px;top:754px" width="13" height="13"><circle cx="6.2" cy="6.2" r="5.6" fill="#dcdcdc"/><path d="M3.6 5 L6.2 7.5 L8.8 5" fill="none" stroke="#9a9a9a" stroke-width="1.1"/></svg>
<div class="t" style="top:765px;left:-1.1999999999999993px;width:30px;text-align:right;font-size:10.6px;line-height:11.84px;color:#1a1a1a;">90</div>
<div class="t" style="top:792px;left:-1.1999999999999993px;width:30px;text-align:right;font-size:10.6px;line-height:11.84px;color:#1a1a1a;">0</div>
<div class="t" style="left:19.5px;top:791.5px;font-size:10px;line-height:10px;color:#1a1a1a;transform-origin:0 0;transform:rotate(-90deg);">ms</div>
<div class="t" style="top:767px;left:1377px;font-size:10.5px;line-height:11.73px;color:#9a3636;">1</div>
<svg class="r" style="left:0px;top:755px" width="1395" height="62"><rect x="31" y="12" width="1344" height="36" fill="#ddeed5"/><rect x="524.5" y="12" width="1" height="36" fill="#c4c4c4"/><rect x="527.2" y="12" width="1" height="36" fill="#c4c4c4"/><rect x="530.1" y="12" width="1" height="36" fill="#c4c4c4"/><rect x="548.3" y="12" width="1" height="36" fill="#c4c4c4"/><rect x="602.5" y="12" width="1" height="36" fill="#c4c4c4"/><rect x="605.5" y="12" width="1" height="36" fill="#c4c4c4"/><rect x="1361.2" y="12" width="1" height="36" fill="#c4c4c4"/><rect x="167" y="12" width="3" height="36" fill="#f2b4a4" opacity="0.75"/><rect x="168" y="12" width="1" height="36" fill="#8e2b22"/><rect x="334" y="12" width="3" height="36" fill="#f2b4a4" opacity="0.75"/><rect x="335" y="12" width="1" height="36" fill="#8e2b22"/><rect x="344" y="12" width="3" height="36" fill="#f2b4a4" opacity="0.75"/><rect x="345" y="12" width="1" height="36" fill="#8e2b22"/><rect x="346" y="12" width="3" height="36" fill="#f2b4a4" opacity="0.75"/><rect x="347" y="12" width="1" height="36" fill="#8e2b22"/><rect x="391" y="12" width="3" height="36" fill="#f2b4a4" opacity="0.75"/><rect x="392" y="12" width="1" height="36" fill="#8e2b22"/><rect x="474" y="12" width="3" height="36" fill="#f2b4a4" opacity="0.75"/><rect x="475" y="12" width="1" height="36" fill="#8e2b22"/><rect x="565" y="12" width="3" height="36" fill="#f2b4a4" opacity="0.75"/><rect x="566" y="12" width="1" height="36" fill="#8e2b22"/><rect x="658" y="12" width="3" height="36" fill="#f2b4a4" opacity="0.75"/><rect x="659" y="12" width="1" height="36" fill="#8e2b22"/><rect x="734" y="12" width="3" height="36" fill="#f2b4a4" opacity="0.75"/><rect x="735" y="12" width="1" height="36" fill="#8e2b22"/><rect x="788" y="12" width="3" height="36" fill="#f2b4a4" opacity="0.75"/><rect x="789" y="12" width="1" height="36" fill="#8e2b22"/><rect x="956" y="12" width="3" height="36" fill="#f2b4a4" opacity="0.75"/><rect x="957" y="12" width="1" height="36" fill="#8e2b22"/><rect x="963" y="12" width="3" height="36" fill="#f2b4a4" opacity="0.75"/><rect x="964" y="12" width="1" height="36" fill="#8e2b22"/><rect x="1008" y="12" width="3" height="36" fill="#f2b4a4" opacity="0.75"/><rect x="1009" y="12" width="1" height="36" fill="#8e2b22"/><rect x="1176" y="12" width="3" height="36" fill="#f2b4a4" opacity="0.75"/><rect x="1177" y="12" width="1" height="36" fill="#8e2b22"/><rect x="1181" y="12" width="3" height="36" fill="#f2b4a4" opacity="0.75"/><rect x="1182" y="12" width="1" height="36" fill="#8e2b22"/><rect x="1241" y="12" width="3" height="36" fill="#f2b4a4" opacity="0.75"/><rect x="1242" y="12" width="1" height="36" fill="#8e2b22"/><rect x="1302" y="12" width="3" height="36" fill="#f2b4a4" opacity="0.75"/><rect x="1303" y="12" width="1" height="36" fill="#8e2b22"/><rect x="1358" y="12" width="3" height="36" fill="#f2b4a4" opacity="0.75"/><rect x="1359" y="12" width="1" height="36" fill="#8e2b22"/><rect x="1365" y="12" width="5" height="36" fill="#f2b4a4" opacity="0.75"/><rect x="1366.5" y="12" width="2.5" height="36" fill="#95201a"/><path d="M32 25 H1375" fill="none" stroke="#0a0a0a" stroke-width="2" shape-rendering="crispEdges"/><path d=" M35 22 h1 v2 h-1 Z M38 26 h1 v1 h-1 Z M42 23 h2 v1 h-2 Z M52 23 h1 v1 h-1 Z M62 23 h2 v1 h-2 Z M69 23 h1 v1 h-1 Z M77 26 h3 v1 h-3 Z M80 22 h1 v2 h-1 Z M102 23 h2 v1 h-2 Z M106 22 h2 v2 h-2 Z M143 23 h2 v1 h-2 Z M155 23 h1 v1 h-1 Z M163 23 h2 v1 h-2 Z M164 22 h1 v2 h-1 Z M168 23 h2 v1 h-2 Z M190 23 h1 v1 h-1 Z M197 23 h1 v1 h-1 Z M217 23 h2 v1 h-2 Z M221 23 h2 v1 h-2 Z M236 22 h1 v2 h-1 Z M239 23 h2 v1 h-2 Z M243 26 h1 v1 h-1 Z M245 23 h2 v1 h-2 Z M248 23 h1 v1 h-1 Z M254 22 h1 v2 h-1 Z M258 23 h1 v1 h-1 Z M263 23 h1 v1 h-1 Z M270 26 h1 v1 h-1 Z M274 26 h1 v1 h-1 Z M281 26 h1 v1 h-1 Z M287 22 h1 v2 h-1 Z M290 23 h2 v1 h-2 Z M292 23 h1 v1 h-1 Z M305 23 h1 v1 h-1 Z M308 23 h1 v1 h-1 Z M310 22 h1 v2 h-1 Z M316 22 h2 v2 h-2 Z M328 26 h2 v1 h-2 Z M330 23 h2 v1 h-2 Z M331 23 h1 v1 h-1 Z M343 26 h1 v1 h-1 Z M348 23 h2 v1 h-2 Z M354 23 h1 v1 h-1 Z M375 26 h3 v1 h-3 Z M378 23 h1 v1 h-1 Z M386 23 h1 v1 h-1 Z M392 26 h2 v1 h-2 Z M401 26 h3 v1 h-3 Z M412 23 h1 v1 h-1 Z M415 23 h1 v1 h-1 Z M419 23 h2 v1 h-2 Z M420 23 h1 v1 h-1 Z M422 23 h2 v1 h-2 Z M427 23 h2 v1 h-2 Z M430 23 h2 v1 h-2 Z M433 26 h3 v1 h-3 Z M451 23 h1 v1 h-1 Z M455 23 h1 v1 h-1 Z M456 23 h2 v1 h-2 Z M466 26 h1 v1 h-1 Z M470 23 h1 v1 h-1 Z M471 26 h1 v1 h-1 Z M472 22 h1 v2 h-1 Z M474 23 h1 v1 h-1 Z M476 23 h1 v1 h-1 Z M487 23 h1 v1 h-1 Z M502 26 h3 v1 h-3 Z M521 26 h2 v1 h-2 Z M533 23 h1 v1 h-1 Z M548 23 h2 v1 h-2 Z M559 26 h2 v1 h-2 Z M561 23 h2 v1 h-2 Z M570 23 h1 v1 h-1 Z M571 23 h1 v1 h-1 Z M574 26 h2 v1 h-2 Z M576 23 h2 v1 h-2 Z M594 26 h1 v1 h-1 Z M596 23 h1 v1 h-1 Z M598 23 h2 v1 h-2 Z M603 23 h2 v1 h-2 Z M615 23 h1 v1 h-1 Z M633 23 h1 v1 h-1 Z M648 26 h2 v1 h-2 Z M652 26 h3 v1 h-3 Z M654 23 h1 v1 h-1 Z M662 23 h2 v1 h-2 Z M664 26 h2 v1 h-2 Z M668 26 h1 v1 h-1 Z M670 22 h2 v2 h-2 Z M671 23 h2 v1 h-2 Z M676 26 h1 v1 h-1 Z M687 23 h2 v1 h-2 Z M693 22 h2 v2 h-2 Z M697 23 h1 v1 h-1 Z M699 23 h2 v1 h-2 Z M706 23 h1 v1 h-1 Z M709 26 h1 v1 h-1 Z M721 23 h2 v1 h-2 Z M734 22 h2 v2 h-2 Z M736 23 h1 v1 h-1 Z M738 23 h1 v1 h-1 Z M741 23 h1 v1 h-1 Z M745 26 h1 v1 h-1 Z M753 23 h1 v1 h-1 Z M761 26 h3 v1 h-3 Z M770 26 h1 v1 h-1 Z M772 26 h1 v1 h-1 Z M781 22 h1 v2 h-1 Z M784 23 h1 v1 h-1 Z M789 23 h2 v1 h-2 Z M794 23 h1 v1 h-1 Z M796 26 h2 v1 h-2 Z M800 26 h1 v1 h-1 Z M807 23 h1 v1 h-1 Z M819 23 h1 v1 h-1 Z M823 22 h1 v2 h-1 Z M833 22 h1 v2 h-1 Z M840 23 h1 v1 h-1 Z M843 23 h1 v1 h-1 Z M844 23 h1 v1 h-1 Z M848 23 h1 v1 h-1 Z M852 23 h1 v1 h-1 Z M857 26 h3 v1 h-3 Z M867 23 h1 v1 h-1 Z M873 26 h2 v1 h-2 Z M875 23 h1 v1 h-1 Z M876 22 h1 v2 h-1 Z M879 23 h1 v1 h-1 Z M885 23 h2 v1 h-2 Z M890 22 h1 v2 h-1 Z M891 23 h1 v1 h-1 Z M896 23 h1 v1 h-1 Z M900 22 h1 v2 h-1 Z M904 23 h2 v1 h-2 Z M905 22 h2 v2 h-2 Z M907 23 h1 v1 h-1 Z M909 26 h3 v1 h-3 Z M912 23 h1 v1 h-1 Z M913 26 h2 v1 h-2 Z M915 23 h1 v1 h-1 Z M928 26 h3 v1 h-3 Z M932 22 h1 v2 h-1 Z M943 26 h1 v1 h-1 Z M946 23 h1 v1 h-1 Z M950 26 h1 v1 h-1 Z M959 23 h1 v1 h-1 Z M979 26 h3 v1 h-3 Z M981 22 h1 v2 h-1 Z M986 22 h1 v2 h-1 Z M988 23 h1 v1 h-1 Z M993 23 h2 v1 h-2 Z M1017 23 h1 v1 h-1 Z M1033 22 h2 v2 h-2 Z M1039 23 h1 v1 h-1 Z M1053 23 h1 v1 h-1 Z M1061 23 h1 v1 h-1 Z M1070 23 h1 v1 h-1 Z M1078 22 h1 v2 h-1 Z M1080 23 h1 v1 h-1 Z M1085 23 h1 v1 h-1 Z M1087 22 h1 v2 h-1 Z M1088 22 h2 v2 h-2 Z M1092 26 h1 v1 h-1 Z M1096 23 h1 v1 h-1 Z M1102 23 h1 v1 h-1 Z M1112 23 h1 v1 h-1 Z M1116 23 h1 v1 h-1 Z M1118 23 h2 v1 h-2 Z M1127 22 h2 v2 h-2 Z M1129 23 h2 v1 h-2 Z M1137 23 h2 v1 h-2 Z M1143 23 h2 v1 h-2 Z M1149 26 h1 v1 h-1 Z M1158 26 h3 v1 h-3 Z M1160 26 h2 v1 h-2 Z M1168 26 h2 v1 h-2 Z M1177 26 h3 v1 h-3 Z M1209 23 h2 v1 h-2 Z M1220 23 h2 v1 h-2 Z M1226 26 h3 v1 h-3 Z M1228 22 h1 v2 h-1 Z M1242 22 h1 v2 h-1 Z M1243 23 h2 v1 h-2 Z M1247 23 h1 v1 h-1 Z M1271 26 h3 v1 h-3 Z M1297 23 h1 v1 h-1 Z M1318 23 h1 v1 h-1 Z M1321 23 h2 v1 h-2 Z M1328 23 h2 v1 h-2 Z M1330 23 h2 v1 h-2 Z M1332 23 h1 v1 h-1 Z M1339 23 h2 v1 h-2 Z M1347 23 h1 v1 h-1 Z M1365 23 h2 v1 h-2 Z M516 18 h1 v7 h-1 Z M600 19 h1 v6 h-1 Z M628 19 h1 v6 h-1 Z M796 19 h1 v6 h-1 Z M980 17 h1 v8 h-1 Z M1011 18 h1 v7 h-1 Z M1245 21 h1 v4 h-1 Z" fill="#0a0a0a" shape-rendering="crispEdges"/><rect x="31" y="12" width="1" height="37" fill="#555"/><rect x="31" y="48" width="1344" height="1" fill="#555"/><rect x="52" y="48" width="1" height="3" fill="#555"/><rect x="108" y="48" width="1" height="3" fill="#555"/><rect x="164" y="48" width="1" height="3" fill="#555"/><rect x="220" y="48" width="1" height="3" fill="#555"/><rect x="276" y="48" width="1" height="3" fill="#555"/><rect x="332" y="48" width="1" height="3" fill="#555"/><rect x="388" y="48" width="1" height="3" fill="#555"/><rect x="444" y="48" width="1" height="3" fill="#555"/><rect x="500" y="48" width="1" height="3" fill="#555"/><rect x="556" y="48" width="1" height="3" fill="#555"/><rect x="612" y="48" width="1" height="3" fill="#555"/><rect x="668" y="48" width="1" height="3" fill="#555"/><rect x="724" y="48" width="1" height="3" fill="#555"/><rect x="780" y="48" width="1" height="3" fill="#555"/><rect x="836" y="48" width="1" height="3" fill="#555"/><rect x="892" y="48" width="1" height="3" fill="#555"/><rect x="948" y="48" width="1" height="3" fill="#555"/><rect x="1004" y="48" width="1" height="3" fill="#555"/><rect x="1060" y="48" width="1" height="3" fill="#555"/><rect x="1116" y="48" width="1" height="3" fill="#555"/><rect x="1172" y="48" width="1" height="3" fill="#555"/><rect x="1228" y="48" width="1" height="3" fill="#555"/><rect x="1284" y="48" width="1" height="3" fill="#555"/><rect x="1340" y="48" width="1" height="3" fill="#555"/></svg>
<div class="t" style="top:805px;left:39.6px;font-size:10.4px;line-height:11.62px;color:#2f552f;">18:45</div>
<div class="t" style="top:805px;left:95.6px;font-size:10.4px;line-height:11.62px;color:#2f552f;">19:00</div>
<div class="t" style="top:805px;left:151.6px;font-size:10.4px;line-height:11.62px;color:#2f552f;">19:15</div>
<div class="t" style="top:805px;left:207.6px;font-size:10.4px;line-height:11.62px;color:#2f552f;">19:30</div>
<div class="t" style="top:805px;left:263.6px;font-size:10.4px;line-height:11.62px;color:#2f552f;">19:45</div>
<div class="t" style="top:805px;left:319.5px;font-size:10.4px;line-height:11.62px;color:#2f552f;">20:00</div>
<div class="t" style="top:805px;left:375.5px;font-size:10.4px;line-height:11.62px;color:#2f552f;">20:15</div>
<div class="t" style="top:805px;left:431.5px;font-size:10.4px;line-height:11.62px;color:#2f552f;">20:30</div>
<div class="t" style="top:805px;left:487.5px;font-size:10.4px;line-height:11.62px;color:#2f552f;">20:45</div>
<div class="t" style="top:805px;left:543.5px;font-size:10.4px;line-height:11.62px;color:#2f552f;">21:00</div>
<div class="t" style="top:805px;left:599.5px;font-size:10.4px;line-height:11.62px;color:#2f552f;">21:15</div>
<div class="t" style="top:805px;left:655.5px;font-size:10.4px;line-height:11.62px;color:#2f552f;">21:30</div>
<div class="t" style="top:805px;left:711.5px;font-size:10.4px;line-height:11.62px;color:#2f552f;">21:45</div>
<div class="t" style="top:805px;left:767.5px;font-size:10.4px;line-height:11.62px;color:#2f552f;">22:00</div>
<div class="t" style="top:805px;left:823.5px;font-size:10.4px;line-height:11.62px;color:#2f552f;">22:15</div>
<div class="t" style="top:805px;left:879.4px;font-size:10.4px;line-height:11.62px;color:#2f552f;">22:30</div>
<div class="t" style="top:805px;left:935.4px;font-size:10.4px;line-height:11.62px;color:#2f552f;">22:45</div>
<div class="t" style="top:805px;left:991.4px;font-size:10.4px;line-height:11.62px;color:#2f552f;">23:00</div>
<div class="t" style="top:805px;left:1047.4px;font-size:10.4px;line-height:11.62px;color:#2f552f;">23:15</div>
<div class="t" style="top:805px;left:1103.4px;font-size:10.4px;line-height:11.62px;color:#2f552f;">23:30</div>
<div class="t" style="top:805px;left:1159.4px;font-size:10.4px;line-height:11.62px;color:#2f552f;">23:45</div>
<div class="t" style="top:805px;left:1221.2px;font-size:10.4px;line-height:11.62px;color:#2f552f;">0:00</div>
<div class="t" style="top:805px;left:1277.2px;font-size:10.4px;line-height:11.62px;color:#2f552f;">0:15</div>
<div class="t" style="top:805px;left:1333.2px;font-size:10.4px;line-height:11.62px;color:#2f552f;">0:30</div>
<div class="r" style="left:1396px;top:406px;width:15px;height:17px;background:#fff;border:1px solid #ababab;box-sizing:border-box;"></div>
<svg class="r" style="left:1396px;top:406px" width="15" height="17"><path d="M4 10.5 L11 10.5 L7.5 6.5 Z" fill="#b0b0b0"/></svg>
<div class="r" style="left:1396px;top:615px;width:15px;height:192px;background:#fff;border:1px solid #ababab;box-sizing:border-box;"></div>
<div class="r" style="left:1396px;top:808px;width:15px;height:16px;background:#fff;border:1px solid #ababab;box-sizing:border-box;"></div>
<svg class="r" style="left:1396px;top:808px" width="15" height="16"><path d="M4 6.5 L11 6.5 L7.5 10.5 Z" fill="#909090"/></svg>
<div class="r" style="left:36px;top:837px;width:1330px;height:3px;background:#a5a5a5;"></div>
<div class="r" style="left:1364px;top:829px;width:17px;height:17px;border-radius:50%;background:#f3f3f3;border:1px solid #cdcdcd;box-sizing:border-box;"></div>
<div class="r" style="left:0px;top:852px;width:1437px;height:1px;background:#c9c9c9;"></div>
<div class="r" style="left:0px;top:853px;width:1437px;height:5px;background:#fdfdfd;"></div>

</body></html>
